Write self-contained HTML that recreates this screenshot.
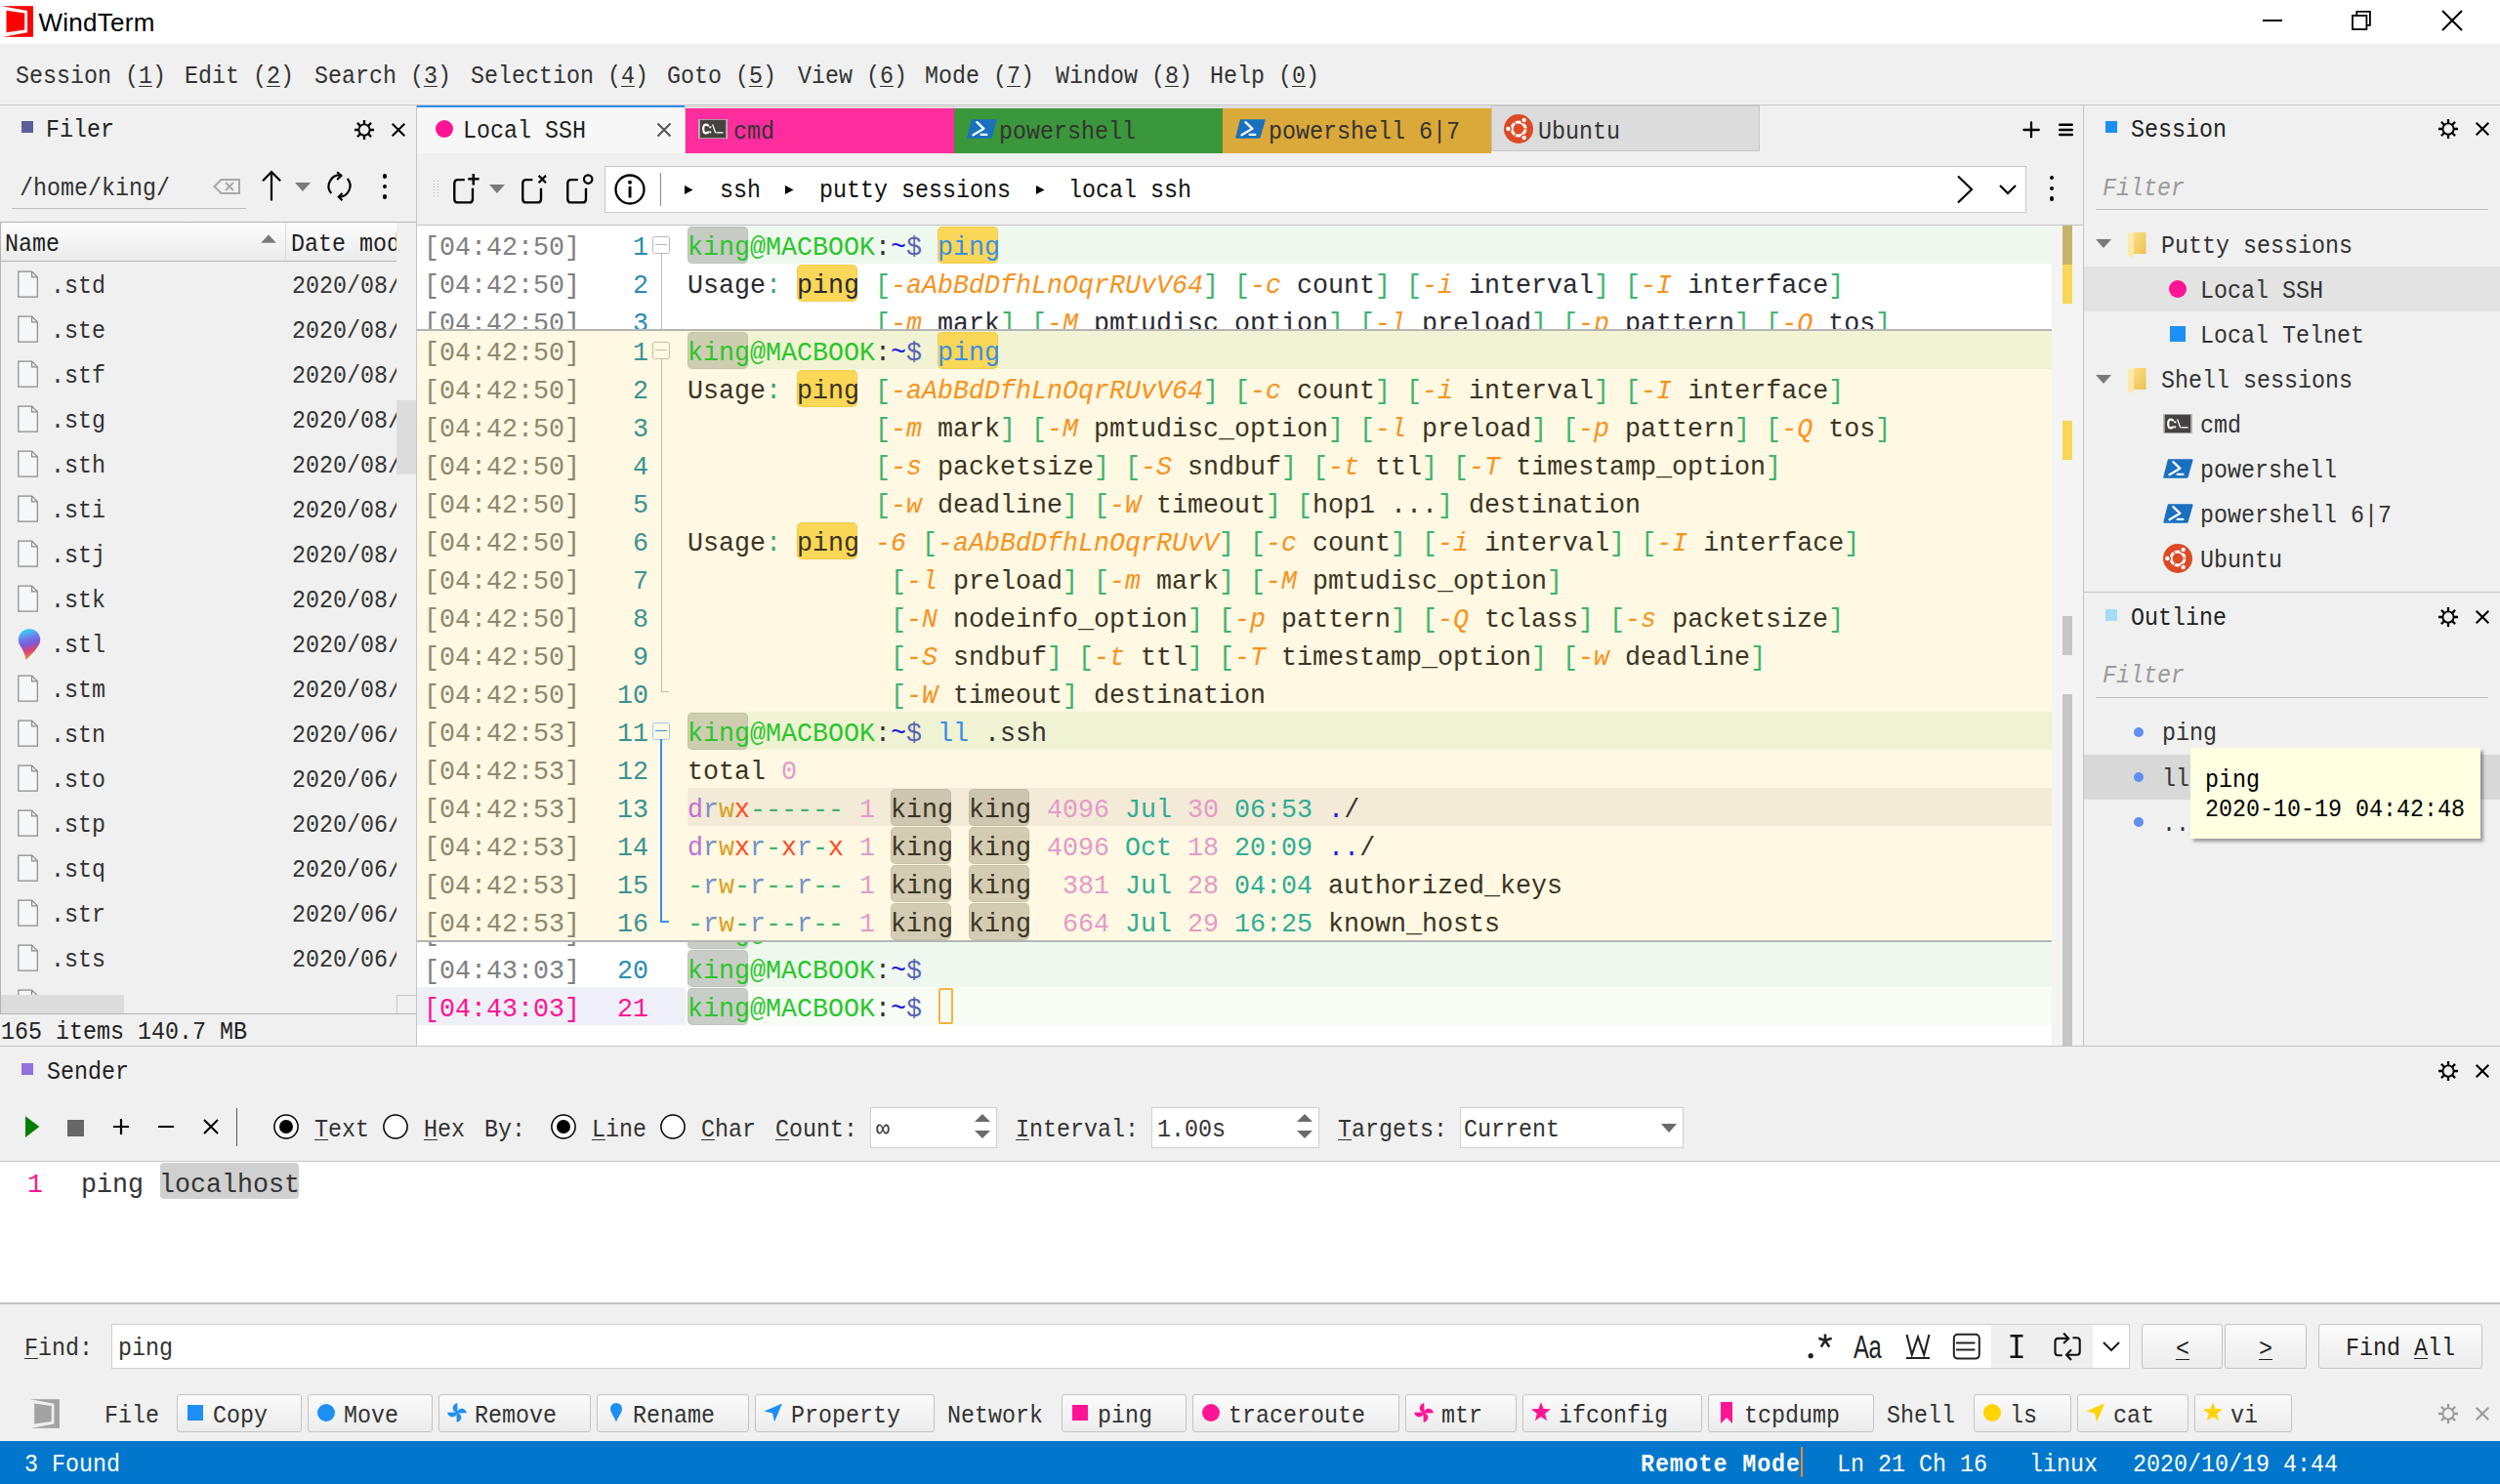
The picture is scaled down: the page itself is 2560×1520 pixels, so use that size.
<!DOCTYPE html><html><head><meta charset="utf-8"><style>
html,body{margin:0;padding:0;}
body{width:2560px;height:1520px;overflow:hidden;position:relative;background:#f0f0f0;font-family:'Liberation Mono',monospace;}
.t{position:absolute;white-space:pre;}
u{text-decoration:underline;text-underline-offset:3px;text-decoration-thickness:1.2px;}
</style></head><body>
<div style="position:absolute;left:0px;top:0px;width:2560px;height:45px;background:#fff"></div>
<svg style="position:absolute;left:2px;top:6px;" width="36.0" height="36.0" viewBox="0 0 36.0 36.0"><g transform="scale(1.0)"><rect x="0.5" y="0.2" width="31.5" height="31.6" fill="#f00"/><path d="M0 0.2 L26.1 5 V27.3 L0 32 Z" fill="#fff"/><path d="M4.5 4.8 L23.2 7.4 V24.6 L4.5 27.2 Z" fill="#f00"/></g></svg>
<div class="t" style="left:39.5px;top:10px;font-size:26px;line-height:26px;color:#000;font-family:'Liberation Sans', sans-serif;letter-spacing:0.27px">WindTerm</div>
<div style="position:absolute;left:2317px;top:20px;width:20px;height:2px;background:#000"></div>
<svg style="position:absolute;left:2404px;top:6px;" width="30" height="30" viewBox="0 0 30 30"><rect x="5" y="10" width="14.4" height="14" fill="none" stroke="#000" stroke-width="1.8"/><path d="M9.3 10 V5.8 H22.9 V19.8 H19.4" fill="none" stroke="#000" stroke-width="1.8"/></svg>
<svg style="position:absolute;left:2498px;top:8px;" width="26" height="26" viewBox="0 0 26 26"><path d="M3 3 L23 23 M23 3 L3 23" stroke="#000" stroke-width="2"/></svg>
<div class="t" style="left:15.6px;top:66px;font-size:25.8px;line-height:25.8px;color:#333;transform:scaleX(0.904);transform-origin:0 0;">Session (<u>1</u>)</div>
<div class="t" style="left:189.3px;top:66px;font-size:25.8px;line-height:25.8px;color:#333;transform:scaleX(0.904);transform-origin:0 0;">Edit (<u>2</u>)</div>
<div class="t" style="left:321.6px;top:66px;font-size:25.8px;line-height:25.8px;color:#333;transform:scaleX(0.904);transform-origin:0 0;">Search (<u>3</u>)</div>
<div class="t" style="left:481.5px;top:66px;font-size:25.8px;line-height:25.8px;color:#333;transform:scaleX(0.904);transform-origin:0 0;">Selection (<u>4</u>)</div>
<div class="t" style="left:683.2px;top:66px;font-size:25.8px;line-height:25.8px;color:#333;transform:scaleX(0.904);transform-origin:0 0;">Goto (<u>5</u>)</div>
<div class="t" style="left:816.7px;top:66px;font-size:25.8px;line-height:25.8px;color:#333;transform:scaleX(0.904);transform-origin:0 0;">View (<u>6</u>)</div>
<div class="t" style="left:947.2px;top:66px;font-size:25.8px;line-height:25.8px;color:#333;transform:scaleX(0.904);transform-origin:0 0;">Mode (<u>7</u>)</div>
<div class="t" style="left:1080.7px;top:66px;font-size:25.8px;line-height:25.8px;color:#333;transform:scaleX(0.904);transform-origin:0 0;">Window (<u>8</u>)</div>
<div class="t" style="left:1239.1px;top:66px;font-size:25.8px;line-height:25.8px;color:#333;transform:scaleX(0.904);transform-origin:0 0;">Help (<u>0</u>)</div>
<div style="position:absolute;left:0px;top:107px;width:2560px;height:1px;background:#c9c9c9"></div>
<div style="position:absolute;left:22px;top:124px;width:12px;height:12px;background:#5a5f9e"></div>
<div class="t" style="left:47px;top:121px;font-size:25.8px;line-height:25.8px;color:#222;transform:scaleX(0.904);transform-origin:0 0;">Filer</div>
<svg style="position:absolute;left:361px;top:120.5px;" width="24" height="24" viewBox="0 0 24 24"><circle cx="12" cy="12" r="5.6" fill="none" stroke="#000" stroke-width="1.9"/><path d="M18.00 12.00 L22.00 12.00 M16.24 16.24 L19.07 19.07 M12.00 18.00 L12.00 22.00 M7.76 16.24 L4.93 19.07 M6.00 12.00 L2.00 12.00 M7.76 7.76 L4.93 4.93 M12.00 6.00 L12.00 2.00 M16.24 7.76 L19.07 4.93" stroke="#000" stroke-width="2.3"/></svg>
<svg style="position:absolute;left:398px;top:122.5px;" width="20" height="20" viewBox="0 0 20 20"><path d="M3.7 3.7 L16.3 16.3 M16.3 3.7 L3.7 16.3" stroke="#000" stroke-width="2"/></svg>
<div class="t" style="left:20px;top:181px;font-size:25.8px;line-height:25.8px;color:#333;transform:scaleX(0.904);transform-origin:0 0;">/home/king/</div>
<div style="position:absolute;left:12px;top:213px;width:240px;height:1px;background:#bdbdbd"></div>
<svg style="position:absolute;left:217px;top:181px;" width="32" height="20" viewBox="0 0 32 20"><path d="M9.5 3 H28 V17 H9.5 L2.5 10 Z" fill="none" stroke="#a8a8a8" stroke-width="2"/><path d="M14 6 L22 14 M22 6 L14 14" stroke="#a8a8a8" stroke-width="2"/></svg>
<svg style="position:absolute;left:266px;top:173px;" width="24" height="34" viewBox="0 0 24 34"><path d="M12 32.5 V3 M3.1 12.2 L12 3 L21.1 12.2" fill="none" stroke="#000" stroke-width="2.2"/></svg>
<svg style="position:absolute;left:301px;top:186px;" width="18" height="12" viewBox="0 0 18 12"><path d="M1 1 H17 L9 10 Z" fill="#7a7a7a"/></svg>
<svg style="position:absolute;left:330px;top:172px;" width="36" height="36" viewBox="0 0 36 36"><path d="M9.2 26 A11.3 11.3 0 0 1 19.6 7.6" fill="none" stroke="#000" stroke-width="2.2"/><path d="M15.2 4.3 L19.4 8.1 L15.2 11.9" fill="none" stroke="#000" stroke-width="2.2"/><path d="M25.8 11 A11.3 11.3 0 0 1 17 29.6" fill="none" stroke="#000" stroke-width="2.2"/><path d="M20.5 26 L16.8 29.6 L20.5 33.3" fill="none" stroke="#000" stroke-width="2.2"/></svg>
<div style="position:absolute;left:391.55px;top:177.85000000000002px;width:4.9px;height:4.9px;border-radius:50%;background:#000"></div>
<div style="position:absolute;left:391.55px;top:188.55px;width:4.9px;height:4.9px;border-radius:50%;background:#000"></div>
<div style="position:absolute;left:391.55px;top:199.15px;width:4.9px;height:4.9px;border-radius:50%;background:#000"></div>
<div style="position:absolute;left:0px;top:227px;width:406px;height:41px;background:linear-gradient(#fdfdfd,#ebebeb);border-top:1px solid #b4b4b4;border-bottom:1px solid #b4b4b4;box-sizing:border-box"></div>
<div style="position:absolute;left:406px;top:227px;width:20px;height:1px;background:#b4b4b4"></div>
<div style="position:absolute;left:0px;top:227px;width:1px;height:812px;background:#b4b4b4"></div>
<div style="position:absolute;left:292px;top:228px;width:1px;height:38px;background:#d8d8d8"></div>
<div class="t" style="left:5px;top:238px;font-size:25.8px;line-height:25.8px;color:#222;transform:scaleX(0.904);transform-origin:0 0;">Name</div>
<svg style="position:absolute;left:267px;top:239px;" width="17" height="11" viewBox="0 0 17 11"><path d="M0.3 9.8 H15.8 L8 1.2 Z" fill="#7a7a7a"/></svg>
<div style="position:absolute;left:297.5px;top:228px;width:108.5px;height:38px;overflow:hidden">
<div class="t" style="left:0px;top:10px;font-size:25.8px;line-height:25.8px;color:#222;transform:scaleX(0.904);transform-origin:0 0;">Date modified</div>
</div>
<div style="position:absolute;left:1px;top:268px;width:405px;height:751px;overflow:hidden">
<svg style="position:absolute;left:15px;top:7.800000000000011px;" width="24" height="32" viewBox="0 0 24 32"><path d="M2.8 2.1 H16.6 L22.3 7.8 V28.2 H2.8 Z" fill="#f6f7f9" stroke="#8a8a8a" stroke-width="1.2"/><path d="M16.6 2.1 V7.8 H22.3" fill="none" stroke="#8a8a8a" stroke-width="1.2"/></svg>
<div class="t" style="left:51px;top:12.800000000000011px;font-size:25.8px;line-height:25.8px;color:#333;transform:scaleX(0.904);transform-origin:0 0;">.std</div>
<div class="t" style="left:298px;top:12.800000000000011px;font-size:25.8px;line-height:25.8px;color:#333;transform:scaleX(0.904);transform-origin:0 0;">2020/08/19</div>
<svg style="position:absolute;left:15px;top:53.80000000000001px;" width="24" height="32" viewBox="0 0 24 32"><path d="M2.8 2.1 H16.6 L22.3 7.8 V28.2 H2.8 Z" fill="#f6f7f9" stroke="#8a8a8a" stroke-width="1.2"/><path d="M16.6 2.1 V7.8 H22.3" fill="none" stroke="#8a8a8a" stroke-width="1.2"/></svg>
<div class="t" style="left:51px;top:58.80000000000001px;font-size:25.8px;line-height:25.8px;color:#333;transform:scaleX(0.904);transform-origin:0 0;">.ste</div>
<div class="t" style="left:298px;top:58.80000000000001px;font-size:25.8px;line-height:25.8px;color:#333;transform:scaleX(0.904);transform-origin:0 0;">2020/08/19</div>
<svg style="position:absolute;left:15px;top:99.80000000000001px;" width="24" height="32" viewBox="0 0 24 32"><path d="M2.8 2.1 H16.6 L22.3 7.8 V28.2 H2.8 Z" fill="#f6f7f9" stroke="#8a8a8a" stroke-width="1.2"/><path d="M16.6 2.1 V7.8 H22.3" fill="none" stroke="#8a8a8a" stroke-width="1.2"/></svg>
<div class="t" style="left:51px;top:104.80000000000001px;font-size:25.8px;line-height:25.8px;color:#333;transform:scaleX(0.904);transform-origin:0 0;">.stf</div>
<div class="t" style="left:298px;top:104.80000000000001px;font-size:25.8px;line-height:25.8px;color:#333;transform:scaleX(0.904);transform-origin:0 0;">2020/08/19</div>
<svg style="position:absolute;left:15px;top:145.8px;" width="24" height="32" viewBox="0 0 24 32"><path d="M2.8 2.1 H16.6 L22.3 7.8 V28.2 H2.8 Z" fill="#f6f7f9" stroke="#8a8a8a" stroke-width="1.2"/><path d="M16.6 2.1 V7.8 H22.3" fill="none" stroke="#8a8a8a" stroke-width="1.2"/></svg>
<div class="t" style="left:51px;top:150.8px;font-size:25.8px;line-height:25.8px;color:#333;transform:scaleX(0.904);transform-origin:0 0;">.stg</div>
<div class="t" style="left:298px;top:150.8px;font-size:25.8px;line-height:25.8px;color:#333;transform:scaleX(0.904);transform-origin:0 0;">2020/08/19</div>
<svg style="position:absolute;left:15px;top:191.8px;" width="24" height="32" viewBox="0 0 24 32"><path d="M2.8 2.1 H16.6 L22.3 7.8 V28.2 H2.8 Z" fill="#f6f7f9" stroke="#8a8a8a" stroke-width="1.2"/><path d="M16.6 2.1 V7.8 H22.3" fill="none" stroke="#8a8a8a" stroke-width="1.2"/></svg>
<div class="t" style="left:51px;top:196.8px;font-size:25.8px;line-height:25.8px;color:#333;transform:scaleX(0.904);transform-origin:0 0;">.sth</div>
<div class="t" style="left:298px;top:196.8px;font-size:25.8px;line-height:25.8px;color:#333;transform:scaleX(0.904);transform-origin:0 0;">2020/08/19</div>
<svg style="position:absolute;left:15px;top:237.79999999999995px;" width="24" height="32" viewBox="0 0 24 32"><path d="M2.8 2.1 H16.6 L22.3 7.8 V28.2 H2.8 Z" fill="#f6f7f9" stroke="#8a8a8a" stroke-width="1.2"/><path d="M16.6 2.1 V7.8 H22.3" fill="none" stroke="#8a8a8a" stroke-width="1.2"/></svg>
<div class="t" style="left:51px;top:242.79999999999995px;font-size:25.8px;line-height:25.8px;color:#333;transform:scaleX(0.904);transform-origin:0 0;">.sti</div>
<div class="t" style="left:298px;top:242.79999999999995px;font-size:25.8px;line-height:25.8px;color:#333;transform:scaleX(0.904);transform-origin:0 0;">2020/08/19</div>
<svg style="position:absolute;left:15px;top:283.79999999999995px;" width="24" height="32" viewBox="0 0 24 32"><path d="M2.8 2.1 H16.6 L22.3 7.8 V28.2 H2.8 Z" fill="#f6f7f9" stroke="#8a8a8a" stroke-width="1.2"/><path d="M16.6 2.1 V7.8 H22.3" fill="none" stroke="#8a8a8a" stroke-width="1.2"/></svg>
<div class="t" style="left:51px;top:288.79999999999995px;font-size:25.8px;line-height:25.8px;color:#333;transform:scaleX(0.904);transform-origin:0 0;">.stj</div>
<div class="t" style="left:298px;top:288.79999999999995px;font-size:25.8px;line-height:25.8px;color:#333;transform:scaleX(0.904);transform-origin:0 0;">2020/08/19</div>
<svg style="position:absolute;left:15px;top:329.79999999999995px;" width="24" height="32" viewBox="0 0 24 32"><path d="M2.8 2.1 H16.6 L22.3 7.8 V28.2 H2.8 Z" fill="#f6f7f9" stroke="#8a8a8a" stroke-width="1.2"/><path d="M16.6 2.1 V7.8 H22.3" fill="none" stroke="#8a8a8a" stroke-width="1.2"/></svg>
<div class="t" style="left:51px;top:334.79999999999995px;font-size:25.8px;line-height:25.8px;color:#333;transform:scaleX(0.904);transform-origin:0 0;">.stk</div>
<div class="t" style="left:298px;top:334.79999999999995px;font-size:25.8px;line-height:25.8px;color:#333;transform:scaleX(0.904);transform-origin:0 0;">2020/08/19</div>
<svg style="position:absolute;left:16px;top:374.99999999999994px;" width="26" height="34" viewBox="0 0 26 34"><defs><linearGradient id="pg" x1="0.3" y1="0" x2="0.5" y2="1"><stop offset="0" stop-color="#2ee2f6"/><stop offset="0.33" stop-color="#7078ee"/><stop offset="0.5" stop-color="#7a5ad8"/><stop offset="0.72" stop-color="#d84478"/><stop offset="0.9" stop-color="#ee7a30"/><stop offset="1" stop-color="#f5b010"/></linearGradient></defs><path d="M22.2 18.5 C19.5 23 15 27.5 9.6 33 C9.2 29 7.5 24.5 3.8 18.5 A11.2 11.2 0 1 1 22.2 18.5 Z" fill="url(#pg)"/></svg>
<div class="t" style="left:51px;top:380.79999999999995px;font-size:25.8px;line-height:25.8px;color:#333;transform:scaleX(0.904);transform-origin:0 0;">.stl</div>
<div class="t" style="left:298px;top:380.79999999999995px;font-size:25.8px;line-height:25.8px;color:#333;transform:scaleX(0.904);transform-origin:0 0;">2020/08/19</div>
<svg style="position:absolute;left:15px;top:421.79999999999995px;" width="24" height="32" viewBox="0 0 24 32"><path d="M2.8 2.1 H16.6 L22.3 7.8 V28.2 H2.8 Z" fill="#f6f7f9" stroke="#8a8a8a" stroke-width="1.2"/><path d="M16.6 2.1 V7.8 H22.3" fill="none" stroke="#8a8a8a" stroke-width="1.2"/></svg>
<div class="t" style="left:51px;top:426.79999999999995px;font-size:25.8px;line-height:25.8px;color:#333;transform:scaleX(0.904);transform-origin:0 0;">.stm</div>
<div class="t" style="left:298px;top:426.79999999999995px;font-size:25.8px;line-height:25.8px;color:#333;transform:scaleX(0.904);transform-origin:0 0;">2020/08/19</div>
<svg style="position:absolute;left:15px;top:467.79999999999995px;" width="24" height="32" viewBox="0 0 24 32"><path d="M2.8 2.1 H16.6 L22.3 7.8 V28.2 H2.8 Z" fill="#f6f7f9" stroke="#8a8a8a" stroke-width="1.2"/><path d="M16.6 2.1 V7.8 H22.3" fill="none" stroke="#8a8a8a" stroke-width="1.2"/></svg>
<div class="t" style="left:51px;top:472.79999999999995px;font-size:25.8px;line-height:25.8px;color:#333;transform:scaleX(0.904);transform-origin:0 0;">.stn</div>
<div class="t" style="left:298px;top:472.79999999999995px;font-size:25.8px;line-height:25.8px;color:#333;transform:scaleX(0.904);transform-origin:0 0;">2020/06/21</div>
<svg style="position:absolute;left:15px;top:513.8px;" width="24" height="32" viewBox="0 0 24 32"><path d="M2.8 2.1 H16.6 L22.3 7.8 V28.2 H2.8 Z" fill="#f6f7f9" stroke="#8a8a8a" stroke-width="1.2"/><path d="M16.6 2.1 V7.8 H22.3" fill="none" stroke="#8a8a8a" stroke-width="1.2"/></svg>
<div class="t" style="left:51px;top:518.8px;font-size:25.8px;line-height:25.8px;color:#333;transform:scaleX(0.904);transform-origin:0 0;">.sto</div>
<div class="t" style="left:298px;top:518.8px;font-size:25.8px;line-height:25.8px;color:#333;transform:scaleX(0.904);transform-origin:0 0;">2020/06/21</div>
<svg style="position:absolute;left:15px;top:559.8px;" width="24" height="32" viewBox="0 0 24 32"><path d="M2.8 2.1 H16.6 L22.3 7.8 V28.2 H2.8 Z" fill="#f6f7f9" stroke="#8a8a8a" stroke-width="1.2"/><path d="M16.6 2.1 V7.8 H22.3" fill="none" stroke="#8a8a8a" stroke-width="1.2"/></svg>
<div class="t" style="left:51px;top:564.8px;font-size:25.8px;line-height:25.8px;color:#333;transform:scaleX(0.904);transform-origin:0 0;">.stp</div>
<div class="t" style="left:298px;top:564.8px;font-size:25.8px;line-height:25.8px;color:#333;transform:scaleX(0.904);transform-origin:0 0;">2020/06/21</div>
<svg style="position:absolute;left:15px;top:605.8px;" width="24" height="32" viewBox="0 0 24 32"><path d="M2.8 2.1 H16.6 L22.3 7.8 V28.2 H2.8 Z" fill="#f6f7f9" stroke="#8a8a8a" stroke-width="1.2"/><path d="M16.6 2.1 V7.8 H22.3" fill="none" stroke="#8a8a8a" stroke-width="1.2"/></svg>
<div class="t" style="left:51px;top:610.8px;font-size:25.8px;line-height:25.8px;color:#333;transform:scaleX(0.904);transform-origin:0 0;">.stq</div>
<div class="t" style="left:298px;top:610.8px;font-size:25.8px;line-height:25.8px;color:#333;transform:scaleX(0.904);transform-origin:0 0;">2020/06/21</div>
<svg style="position:absolute;left:15px;top:651.8px;" width="24" height="32" viewBox="0 0 24 32"><path d="M2.8 2.1 H16.6 L22.3 7.8 V28.2 H2.8 Z" fill="#f6f7f9" stroke="#8a8a8a" stroke-width="1.2"/><path d="M16.6 2.1 V7.8 H22.3" fill="none" stroke="#8a8a8a" stroke-width="1.2"/></svg>
<div class="t" style="left:51px;top:656.8px;font-size:25.8px;line-height:25.8px;color:#333;transform:scaleX(0.904);transform-origin:0 0;">.str</div>
<div class="t" style="left:298px;top:656.8px;font-size:25.8px;line-height:25.8px;color:#333;transform:scaleX(0.904);transform-origin:0 0;">2020/06/21</div>
<svg style="position:absolute;left:15px;top:697.8px;" width="24" height="32" viewBox="0 0 24 32"><path d="M2.8 2.1 H16.6 L22.3 7.8 V28.2 H2.8 Z" fill="#f6f7f9" stroke="#8a8a8a" stroke-width="1.2"/><path d="M16.6 2.1 V7.8 H22.3" fill="none" stroke="#8a8a8a" stroke-width="1.2"/></svg>
<div class="t" style="left:51px;top:702.8px;font-size:25.8px;line-height:25.8px;color:#333;transform:scaleX(0.904);transform-origin:0 0;">.sts</div>
<div class="t" style="left:298px;top:702.8px;font-size:25.8px;line-height:25.8px;color:#333;transform:scaleX(0.904);transform-origin:0 0;">2020/06/21</div>
<svg style="position:absolute;left:15px;top:743.8px;" width="24" height="32" viewBox="0 0 24 32"><path d="M2.8 2.1 H16.6 L22.3 7.8 V28.2 H2.8 Z" fill="#f6f7f9" stroke="#8a8a8a" stroke-width="1.2"/><path d="M16.6 2.1 V7.8 H22.3" fill="none" stroke="#8a8a8a" stroke-width="1.2"/></svg>
<div class="t" style="left:51px;top:748.8px;font-size:25.8px;line-height:25.8px;color:#333;transform:scaleX(0.904);transform-origin:0 0;">.stt</div>
</div>
<div style="position:absolute;left:406px;top:268px;width:20px;height:751px;background:#f0f0f0"></div>
<div style="position:absolute;left:406px;top:410px;width:20px;height:76px;background:#dcdcdc"></div>
<div style="position:absolute;left:1px;top:1019px;width:405px;height:20px;background:#f0f0f0"></div>
<div style="position:absolute;left:1px;top:1019px;width:126px;height:20px;background:#dcdcdc"></div>
<div style="position:absolute;left:406px;top:1019px;width:20px;height:20px;background:#f0f0f0;border-top:1px solid #c8c8c8;border-left:1px solid #c8c8c8;box-sizing:border-box"></div>
<div style="position:absolute;left:0px;top:1038px;width:426px;height:1px;background:#b4b4b4"></div>
<div class="t" style="left:1px;top:1045px;font-size:25.8px;line-height:25.8px;color:#222;transform:scaleX(0.904);transform-origin:0 0;">165 items 140.7 MB</div>
<div style="position:absolute;left:0px;top:1071px;width:2560px;height:1px;background:#c4c4c4"></div>
<div style="position:absolute;left:426px;top:108px;width:1px;height:964px;background:#c4c4c4"></div>
<div style="position:absolute;left:427px;top:108px;width:274px;height:49px;background:#f7f7f7"></div>
<div style="position:absolute;left:427px;top:108px;width:274px;height:2px;background:#2c8cf0"></div>
<div style="position:absolute;left:701px;top:108px;width:1px;height:49px;background:#cfcfcf"></div>
<div style="position:absolute;left:446px;top:123px;width:18px;height:18px;border-radius:50%;background:#ff1493"></div>
<div class="t" style="left:474px;top:122px;font-size:25.8px;line-height:25.8px;color:#222;transform:scaleX(0.904);transform-origin:0 0;">Local SSH</div>
<svg style="position:absolute;left:670px;top:122.5px;" width="20" height="20" viewBox="0 0 20 20"><path d="M3.5 3.5 L16.5 16.5 M16.5 3.5 L3.5 16.5" stroke="#555" stroke-width="2"/></svg>
<div style="position:absolute;left:702px;top:108px;width:1100px;height:3px;background:#dedede"></div>
<div style="position:absolute;left:702px;top:111px;width:275px;height:46px;background:#ff2d9d"></div>
<div style="position:absolute;left:977px;top:111px;width:275px;height:46px;background:#3b973b"></div>
<div style="position:absolute;left:1252px;top:111px;width:275px;height:46px;background:#dba93a"></div>
<div style="position:absolute;left:976px;top:108px;width:1px;height:3px;background:#c8c8c8"></div>
<div style="position:absolute;left:1527px;top:108px;width:275px;height:47px;background:#dcdcdc;border:1px solid #c6c6c6;box-sizing:border-box"></div>
<svg style="position:absolute;left:715px;top:122px;" width="30" height="20" viewBox="0 0 30 20"><rect x="0" y="0" width="30" height="20" fill="#b8b8b8"/><rect x="1.8" y="0.8" width="26.4" height="18.4" fill="#464241"/><path d="M10.2 7.4 Q10.2 5.6 7.8 5.6 Q5.2 5.6 5.2 10 Q5.2 14.4 7.8 14.4 Q10.2 14.4 10.2 12.6" fill="none" stroke="#fff" stroke-width="2.2"/><rect x="11.3" y="7.3" width="2" height="2" fill="#fff"/><rect x="11.3" y="12.4" width="2" height="2" fill="#fff"/><path d="M14.6 5.4 L17.8 14.2" stroke="#fff" stroke-width="1.3"/><rect x="18.6" y="13.2" width="7" height="1.3" fill="#fff"/></svg>
<div class="t" style="left:751px;top:123px;font-size:25.8px;line-height:25.8px;color:#333;transform:scaleX(0.904);transform-origin:0 0;">cmd</div>
<svg style="position:absolute;left:990px;top:122px;" width="31" height="21" viewBox="0 0 31 21"><path d="M5.6 0.3 H29.6 Q31 0.3 30.5 1.8 L25.7 18.5 Q25.3 19.7 24 19.7 H1.4 Q0 19.7 0.4 18.2 L4.6 1.5 Q4.9 0.3 5.6 0.3 Z" fill="#1870bf"/><path d="M10.4 3.1 L17.4 9.8 L6.5 16.2" fill="none" stroke="#fff" stroke-width="2.3" stroke-linecap="round" stroke-linejoin="round"/><path d="M14.6 15.9 H20.4" stroke="#fff" stroke-width="2.2" stroke-linecap="round"/></svg>
<div class="t" style="left:1023px;top:123px;font-size:25.8px;line-height:25.8px;color:#333;transform:scaleX(0.904);transform-origin:0 0;">powershell</div>
<svg style="position:absolute;left:1265px;top:122px;" width="31" height="21" viewBox="0 0 31 21"><path d="M5.6 0.3 H29.6 Q31 0.3 30.5 1.8 L25.7 18.5 Q25.3 19.7 24 19.7 H1.4 Q0 19.7 0.4 18.2 L4.6 1.5 Q4.9 0.3 5.6 0.3 Z" fill="#1870bf"/><path d="M10.4 3.1 L17.4 9.8 L6.5 16.2" fill="none" stroke="#fff" stroke-width="2.3" stroke-linecap="round" stroke-linejoin="round"/><path d="M14.6 15.9 H20.4" stroke="#fff" stroke-width="2.2" stroke-linecap="round"/></svg>
<div class="t" style="left:1298.5px;top:123px;font-size:25.8px;line-height:25.8px;color:#333;transform:scaleX(0.904);transform-origin:0 0;">powershell 6|7</div>
<svg style="position:absolute;left:1540px;top:117px;" width="30" height="30" viewBox="0 0 30 30"><circle cx="15" cy="15" r="15" fill="#dd4a26"/><circle cx="15" cy="15" r="7" fill="none" stroke="#fff" stroke-width="3.1"/><path d="M19.80 15.00 L24.40 15.00" stroke="#dd4a26" stroke-width="1.1"/><path d="M12.60 19.16 L10.30 23.14" stroke="#dd4a26" stroke-width="1.1"/><path d="M12.60 10.84 L10.30 6.86" stroke="#dd4a26" stroke-width="1.1"/><circle cx="4.40" cy="15.00" r="3.6" fill="#dd4a26"/><circle cx="4.40" cy="15.00" r="2.2" fill="#fff"/><circle cx="20.62" cy="6.01" r="3.6" fill="#dd4a26"/><circle cx="20.62" cy="6.01" r="2.2" fill="#fff"/><circle cx="20.62" cy="23.99" r="3.6" fill="#dd4a26"/><circle cx="20.62" cy="23.99" r="2.2" fill="#fff"/></svg>
<div class="t" style="left:1575px;top:123px;font-size:25.8px;line-height:25.8px;color:#333;transform:scaleX(0.904);transform-origin:0 0;">Ubuntu</div>
<svg style="position:absolute;left:2068px;top:121px;" width="24" height="24" viewBox="0 0 24 24"><path d="M12 4.4 V19.3 M4.4 12 H19.8" stroke="#000" stroke-width="2.3" stroke-linecap="round"/></svg>
<svg style="position:absolute;left:2103px;top:124px;" width="24" height="20" viewBox="0 0 24 20"><path d="M6.2 3.8 H18.8 M6.2 9 H18.8 M6.2 14.1 H18.8" stroke="#000" stroke-width="2.5" stroke-linecap="round"/></svg>
<div style="position:absolute;left:443.5px;top:185px;width:1px;height:1px;background:#b0b0b0"></div>
<div style="position:absolute;left:447.5px;top:185px;width:1px;height:1px;background:#b0b0b0"></div>
<div style="position:absolute;left:443.5px;top:188px;width:1px;height:1px;background:#b0b0b0"></div>
<div style="position:absolute;left:447.5px;top:188px;width:1px;height:1px;background:#b0b0b0"></div>
<div style="position:absolute;left:443.5px;top:191px;width:1px;height:1px;background:#b0b0b0"></div>
<div style="position:absolute;left:447.5px;top:191px;width:1px;height:1px;background:#b0b0b0"></div>
<div style="position:absolute;left:443.5px;top:194px;width:1px;height:1px;background:#b0b0b0"></div>
<div style="position:absolute;left:447.5px;top:194px;width:1px;height:1px;background:#b0b0b0"></div>
<div style="position:absolute;left:443.5px;top:197px;width:1px;height:1px;background:#b0b0b0"></div>
<div style="position:absolute;left:447.5px;top:197px;width:1px;height:1px;background:#b0b0b0"></div>
<div style="position:absolute;left:443.5px;top:200px;width:1px;height:1px;background:#b0b0b0"></div>
<div style="position:absolute;left:447.5px;top:200px;width:1px;height:1px;background:#b0b0b0"></div>
<svg style="position:absolute;left:461px;top:176px;" width="32" height="34" viewBox="0 0 32 34"><path d="M14.8 8.1 H7.8 Q4.3 8.1 4.3 11.6 V27.9 Q4.3 31.4 7.8 31.4 H19.5 Q23 31.4 23 27.9 V16.8" fill="none" stroke="#000" stroke-width="2.35"/><path d="M23.8 2 V13.4 M18.3 7.3 H29.6" stroke="#000" stroke-width="2.5"/></svg>
<svg style="position:absolute;left:500px;top:188px;" width="18" height="12" viewBox="0 0 18 12"><path d="M1 1 H17 L9 10 Z" fill="#7a7a7a"/></svg>
<svg style="position:absolute;left:531px;top:176px;" width="32" height="34" viewBox="0 0 32 34"><path d="M14.4 8.1 H7.8 Q4.3 8.1 4.3 11.6 V27.9 Q4.3 31.4 7.8 31.4 H19.5 Q23 31.4 23 27.9 V16.8" fill="none" stroke="#000" stroke-width="2.35"/><path d="M20.6 3.9 L28 11.2 M28 3.9 L20.6 11.2" stroke="#000" stroke-width="2.2"/></svg>
<svg style="position:absolute;left:576.5px;top:176px;" width="32" height="34" viewBox="0 0 32 34"><path d="M14.8 8.1 H7.8 Q4.3 8.1 4.3 11.6 V27.9 Q4.3 31.4 7.8 31.4 H19.5 Q23 31.4 23 27.9 V16.8" fill="none" stroke="#000" stroke-width="2.35"/><circle cx="25.2" cy="7.6" r="4.2" fill="none" stroke="#000" stroke-width="2.2"/></svg>
<div style="position:absolute;left:619px;top:170px;width:1456px;height:48px;background:#fff;border:1px solid #c6c6c6;box-sizing:border-box"></div>
<svg style="position:absolute;left:628px;top:177px;" width="34" height="34" viewBox="0 0 34 34"><circle cx="17" cy="17" r="14.5" fill="none" stroke="#000" stroke-width="2.3"/><circle cx="17" cy="9.8" r="2" fill="#000"/><rect x="15.6" y="14" width="2.9" height="11.5" fill="#000"/></svg>
<div style="position:absolute;left:676px;top:177px;width:1px;height:34px;background:#8a8a8a"></div>
<svg style="position:absolute;left:700px;top:189px;" width="10" height="12" viewBox="0 0 10 12"><path d="M1 1 L9.6 5.5 L1 10 Z" fill="#000"/></svg>
<div class="t" style="left:737px;top:183px;font-size:25.8px;line-height:25.8px;color:#111;transform:scaleX(0.904);transform-origin:0 0;">ssh</div>
<svg style="position:absolute;left:803px;top:189px;" width="10" height="12" viewBox="0 0 10 12"><path d="M1 1 L9.6 5.5 L1 10 Z" fill="#000"/></svg>
<div class="t" style="left:839px;top:183px;font-size:25.8px;line-height:25.8px;color:#111;transform:scaleX(0.904);transform-origin:0 0;">putty sessions</div>
<svg style="position:absolute;left:1060px;top:189px;" width="10" height="12" viewBox="0 0 10 12"><path d="M1 1 L9.6 5.5 L1 10 Z" fill="#000"/></svg>
<div class="t" style="left:1094px;top:183px;font-size:25.8px;line-height:25.8px;color:#111;transform:scaleX(0.904);transform-origin:0 0;">local ssh</div>
<svg style="position:absolute;left:2000px;top:178px;" width="24" height="32" viewBox="0 0 24 32"><path d="M5 2.5 L19 16 L5 29.5" fill="none" stroke="#000" stroke-width="2.2"/></svg>
<svg style="position:absolute;left:2045px;top:186px;" width="22" height="16" viewBox="0 0 22 16"><path d="M3 4 L11 12 L19 4" fill="none" stroke="#000" stroke-width="2.2"/></svg>
<div style="position:absolute;left:2098.65px;top:179.65px;width:4.7px;height:4.7px;border-radius:50%;background:#000"></div>
<div style="position:absolute;left:2098.65px;top:190.65px;width:4.7px;height:4.7px;border-radius:50%;background:#000"></div>
<div style="position:absolute;left:2098.65px;top:201.45000000000002px;width:4.7px;height:4.7px;border-radius:50%;background:#000"></div>
<div style="position:absolute;left:427px;top:230px;width:1706px;height:1px;background:#c4c4c4"></div>
<div style="position:absolute;left:427px;top:231px;width:1674px;height:106px;overflow:hidden;background:#fff">
<div style="position:absolute;left:-427px;top:-231px;width:2560px;height:1520px">
<div style="position:absolute;left:704px;top:231px;width:1397px;height:39px;background:#eef8ee"></div>
<div style="position:absolute;left:703.7px;top:231.6px;width:62.0px;height:38px;background:#c6cbc4;border-radius:5px;box-shadow:inset 0 0 0 1px rgba(0,0,0,0.05)"></div>
<div style="position:absolute;left:959.7px;top:231.6px;width:62.0px;height:38px;background:#fbd757;border-radius:5px;box-shadow:inset 0 0 0 1px rgba(0,0,0,0.05)"></div>
<div class="t" style="left:434px;top:240px;font-size:28.5px;line-height:28.5px;color:#808080;transform:scaleX(0.9355);transform-origin:0 0;">[04:42:50]</div>
<div class="t" style="left:648.0px;top:240px;font-size:28.5px;line-height:28.5px;color:#2b8db3;transform:scaleX(0.9355);transform-origin:0 0;">1</div>
<div class="t" style="left:704px;top:240px;font-size:28.5px;line-height:28.5px;color:#2a2a33;transform:scaleX(0.9355);transform-origin:0 0"><span style="color:#2bc62b">king@MACBOOK</span><span style="color:#333">:</span><span style="color:#1a1ae6">~</span><span style="color:#5a66b4">$</span><span style="color:#333"> </span><span style="color:#3a8ee6">ping</span></div>
<div style="position:absolute;left:815.7px;top:270.6px;width:62.0px;height:38px;background:#fbd757;border-radius:5px;box-shadow:inset 0 0 0 1px rgba(0,0,0,0.05)"></div>
<div class="t" style="left:434px;top:279px;font-size:28.5px;line-height:28.5px;color:#808080;transform:scaleX(0.9355);transform-origin:0 0;">[04:42:50]</div>
<div class="t" style="left:648.0px;top:279px;font-size:28.5px;line-height:28.5px;color:#2b8db3;transform:scaleX(0.9355);transform-origin:0 0;">2</div>
<div class="t" style="left:704px;top:279px;font-size:28.5px;line-height:28.5px;color:#2a2a33;transform:scaleX(0.9355);transform-origin:0 0"><span style="color:#2a2a33">Usage</span><span style="color:#3aa57c">:</span><span style="color:#333"> </span><span style="color:#2a2a33">ping</span><span style="color:#2a2a33"> </span><span style="color:#3db46e">[</span><span style="color:#f7931e;font-style:italic">-aAbBdDfhLnOqrRUvV64</span><span style="color:#3db46e">]</span><span style="color:#2a2a33"> </span><span style="color:#3db46e">[</span><span style="color:#f7931e;font-style:italic">-c</span><span style="color:#2a2a33"> count</span><span style="color:#3db46e">]</span><span style="color:#2a2a33"> </span><span style="color:#3db46e">[</span><span style="color:#f7931e;font-style:italic">-i</span><span style="color:#2a2a33"> interval</span><span style="color:#3db46e">]</span><span style="color:#2a2a33"> </span><span style="color:#3db46e">[</span><span style="color:#f7931e;font-style:italic">-I</span><span style="color:#2a2a33"> interface</span><span style="color:#3db46e">]</span></div>
<div class="t" style="left:434px;top:318px;font-size:28.5px;line-height:28.5px;color:#808080;transform:scaleX(0.9355);transform-origin:0 0;">[04:42:50]</div>
<div class="t" style="left:648.0px;top:318px;font-size:28.5px;line-height:28.5px;color:#2b8db3;transform:scaleX(0.9355);transform-origin:0 0;">3</div>
<div class="t" style="left:704px;top:318px;font-size:28.5px;line-height:28.5px;color:#2a2a33;transform:scaleX(0.9355);transform-origin:0 0"><span style="color:#2a2a33">            </span><span style="color:#3db46e">[</span><span style="color:#f7931e;font-style:italic">-m</span><span style="color:#2a2a33"> mark</span><span style="color:#3db46e">]</span><span style="color:#2a2a33"> </span><span style="color:#3db46e">[</span><span style="color:#f7931e;font-style:italic">-M</span><span style="color:#2a2a33"> pmtudisc_option</span><span style="color:#3db46e">]</span><span style="color:#2a2a33"> </span><span style="color:#3db46e">[</span><span style="color:#f7931e;font-style:italic">-l</span><span style="color:#2a2a33"> preload</span><span style="color:#3db46e">]</span><span style="color:#2a2a33"> </span><span style="color:#3db46e">[</span><span style="color:#f7931e;font-style:italic">-p</span><span style="color:#2a2a33"> pattern</span><span style="color:#3db46e">]</span><span style="color:#2a2a33"> </span><span style="color:#3db46e">[</span><span style="color:#f7931e;font-style:italic">-Q</span><span style="color:#2a2a33"> tos</span><span style="color:#3db46e">]</span></div>
<div style="position:absolute;left:668px;top:242px;width:18px;height:17.5px;border:1.6px solid #b9b9b9;border-radius:2.5px;box-sizing:border-box;background:transparent"></div>
<div style="position:absolute;left:671px;top:250.1px;width:12px;height:1.4px;background:#b9b9b9"></div>
<div style="position:absolute;left:676.5px;top:259px;width:1.3px;height:80px;background:#b9b9b9"></div>
</div></div>
<div style="position:absolute;left:427px;top:337px;width:1674px;height:2px;background:#b5b5b5"></div>
<div style="position:absolute;left:427px;top:339px;width:1674px;height:624px;background:#fff8e2"></div>
<div style="position:absolute;left:704px;top:339px;width:1397px;height:39px;background:#f1f3d4"></div>
<div style="position:absolute;left:703.7px;top:339.6px;width:62.0px;height:38px;background:#cfcdb1;border-radius:5px;box-shadow:inset 0 0 0 1px rgba(0,0,0,0.05)"></div>
<div style="position:absolute;left:959.7px;top:339.6px;width:62.0px;height:38px;background:#fbd757;border-radius:5px;box-shadow:inset 0 0 0 1px rgba(0,0,0,0.05)"></div>
<div class="t" style="left:434px;top:348px;font-size:28.5px;line-height:28.5px;color:#8d896f;transform:scaleX(0.9355);transform-origin:0 0;">[04:42:50]</div>
<div class="t" style="left:648.0px;top:348px;font-size:28.5px;line-height:28.5px;color:#3b9393;transform:scaleX(0.9355);transform-origin:0 0;">1</div>
<div class="t" style="left:704px;top:348px;font-size:28.5px;line-height:28.5px;color:#3b3424;transform:scaleX(0.9355);transform-origin:0 0"><span style="color:#2bc62b">king@MACBOOK</span><span style="color:#333">:</span><span style="color:#1a1ae6">~</span><span style="color:#5a66b4">$</span><span style="color:#333"> </span><span style="color:#3a8ee6">ping</span></div>
<div style="position:absolute;left:815.7px;top:378.6px;width:62.0px;height:38px;background:#fbd757;border-radius:5px;box-shadow:inset 0 0 0 1px rgba(0,0,0,0.05)"></div>
<div class="t" style="left:434px;top:387px;font-size:28.5px;line-height:28.5px;color:#8d896f;transform:scaleX(0.9355);transform-origin:0 0;">[04:42:50]</div>
<div class="t" style="left:648.0px;top:387px;font-size:28.5px;line-height:28.5px;color:#3b9393;transform:scaleX(0.9355);transform-origin:0 0;">2</div>
<div class="t" style="left:704px;top:387px;font-size:28.5px;line-height:28.5px;color:#3b3424;transform:scaleX(0.9355);transform-origin:0 0"><span style="color:#3b3424">Usage</span><span style="color:#3aa57c">:</span><span style="color:#3b3424"> </span><span style="color:#3b3424">ping</span><span style="color:#3b3424"> </span><span style="color:#3db46e">[</span><span style="color:#f7931e;font-style:italic">-aAbBdDfhLnOqrRUvV64</span><span style="color:#3db46e">]</span><span style="color:#3b3424"> </span><span style="color:#3db46e">[</span><span style="color:#f7931e;font-style:italic">-c</span><span style="color:#3b3424"> count</span><span style="color:#3db46e">]</span><span style="color:#3b3424"> </span><span style="color:#3db46e">[</span><span style="color:#f7931e;font-style:italic">-i</span><span style="color:#3b3424"> interval</span><span style="color:#3db46e">]</span><span style="color:#3b3424"> </span><span style="color:#3db46e">[</span><span style="color:#f7931e;font-style:italic">-I</span><span style="color:#3b3424"> interface</span><span style="color:#3db46e">]</span></div>
<div class="t" style="left:434px;top:426px;font-size:28.5px;line-height:28.5px;color:#8d896f;transform:scaleX(0.9355);transform-origin:0 0;">[04:42:50]</div>
<div class="t" style="left:648.0px;top:426px;font-size:28.5px;line-height:28.5px;color:#3b9393;transform:scaleX(0.9355);transform-origin:0 0;">3</div>
<div class="t" style="left:704px;top:426px;font-size:28.5px;line-height:28.5px;color:#3b3424;transform:scaleX(0.9355);transform-origin:0 0"><span style="color:#3b3424">            </span><span style="color:#3db46e">[</span><span style="color:#f7931e;font-style:italic">-m</span><span style="color:#3b3424"> mark</span><span style="color:#3db46e">]</span><span style="color:#3b3424"> </span><span style="color:#3db46e">[</span><span style="color:#f7931e;font-style:italic">-M</span><span style="color:#3b3424"> pmtudisc_option</span><span style="color:#3db46e">]</span><span style="color:#3b3424"> </span><span style="color:#3db46e">[</span><span style="color:#f7931e;font-style:italic">-l</span><span style="color:#3b3424"> preload</span><span style="color:#3db46e">]</span><span style="color:#3b3424"> </span><span style="color:#3db46e">[</span><span style="color:#f7931e;font-style:italic">-p</span><span style="color:#3b3424"> pattern</span><span style="color:#3db46e">]</span><span style="color:#3b3424"> </span><span style="color:#3db46e">[</span><span style="color:#f7931e;font-style:italic">-Q</span><span style="color:#3b3424"> tos</span><span style="color:#3db46e">]</span></div>
<div class="t" style="left:434px;top:465px;font-size:28.5px;line-height:28.5px;color:#8d896f;transform:scaleX(0.9355);transform-origin:0 0;">[04:42:50]</div>
<div class="t" style="left:648.0px;top:465px;font-size:28.5px;line-height:28.5px;color:#3b9393;transform:scaleX(0.9355);transform-origin:0 0;">4</div>
<div class="t" style="left:704px;top:465px;font-size:28.5px;line-height:28.5px;color:#3b3424;transform:scaleX(0.9355);transform-origin:0 0"><span style="color:#3b3424">            </span><span style="color:#3db46e">[</span><span style="color:#f7931e;font-style:italic">-s</span><span style="color:#3b3424"> packetsize</span><span style="color:#3db46e">]</span><span style="color:#3b3424"> </span><span style="color:#3db46e">[</span><span style="color:#f7931e;font-style:italic">-S</span><span style="color:#3b3424"> sndbuf</span><span style="color:#3db46e">]</span><span style="color:#3b3424"> </span><span style="color:#3db46e">[</span><span style="color:#f7931e;font-style:italic">-t</span><span style="color:#3b3424"> ttl</span><span style="color:#3db46e">]</span><span style="color:#3b3424"> </span><span style="color:#3db46e">[</span><span style="color:#f7931e;font-style:italic">-T</span><span style="color:#3b3424"> timestamp_option</span><span style="color:#3db46e">]</span></div>
<div class="t" style="left:434px;top:504px;font-size:28.5px;line-height:28.5px;color:#8d896f;transform:scaleX(0.9355);transform-origin:0 0;">[04:42:50]</div>
<div class="t" style="left:648.0px;top:504px;font-size:28.5px;line-height:28.5px;color:#3b9393;transform:scaleX(0.9355);transform-origin:0 0;">5</div>
<div class="t" style="left:704px;top:504px;font-size:28.5px;line-height:28.5px;color:#3b3424;transform:scaleX(0.9355);transform-origin:0 0"><span style="color:#3b3424">            </span><span style="color:#3db46e">[</span><span style="color:#f7931e;font-style:italic">-w</span><span style="color:#3b3424"> deadline</span><span style="color:#3db46e">]</span><span style="color:#3b3424"> </span><span style="color:#3db46e">[</span><span style="color:#f7931e;font-style:italic">-W</span><span style="color:#3b3424"> timeout</span><span style="color:#3db46e">]</span><span style="color:#3b3424"> </span><span style="color:#3db46e">[</span><span style="color:#3b3424">hop1 ...</span><span style="color:#3db46e">]</span><span style="color:#3b3424"> destination</span></div>
<div style="position:absolute;left:815.7px;top:534.6px;width:62.0px;height:38px;background:#fbd757;border-radius:5px;box-shadow:inset 0 0 0 1px rgba(0,0,0,0.05)"></div>
<div class="t" style="left:434px;top:543px;font-size:28.5px;line-height:28.5px;color:#8d896f;transform:scaleX(0.9355);transform-origin:0 0;">[04:42:50]</div>
<div class="t" style="left:648.0px;top:543px;font-size:28.5px;line-height:28.5px;color:#3b9393;transform:scaleX(0.9355);transform-origin:0 0;">6</div>
<div class="t" style="left:704px;top:543px;font-size:28.5px;line-height:28.5px;color:#3b3424;transform:scaleX(0.9355);transform-origin:0 0"><span style="color:#3b3424">Usage</span><span style="color:#3aa57c">:</span><span style="color:#3b3424"> </span><span style="color:#3b3424">ping</span><span style="color:#3b3424"> </span><span style="color:#f7931e;font-style:italic">-6</span><span style="color:#3b3424"> </span><span style="color:#3db46e">[</span><span style="color:#f7931e;font-style:italic">-aAbBdDfhLnOqrRUvV</span><span style="color:#3db46e">]</span><span style="color:#3b3424"> </span><span style="color:#3db46e">[</span><span style="color:#f7931e;font-style:italic">-c</span><span style="color:#3b3424"> count</span><span style="color:#3db46e">]</span><span style="color:#3b3424"> </span><span style="color:#3db46e">[</span><span style="color:#f7931e;font-style:italic">-i</span><span style="color:#3b3424"> interval</span><span style="color:#3db46e">]</span><span style="color:#3b3424"> </span><span style="color:#3db46e">[</span><span style="color:#f7931e;font-style:italic">-I</span><span style="color:#3b3424"> interface</span><span style="color:#3db46e">]</span></div>
<div class="t" style="left:434px;top:582px;font-size:28.5px;line-height:28.5px;color:#8d896f;transform:scaleX(0.9355);transform-origin:0 0;">[04:42:50]</div>
<div class="t" style="left:648.0px;top:582px;font-size:28.5px;line-height:28.5px;color:#3b9393;transform:scaleX(0.9355);transform-origin:0 0;">7</div>
<div class="t" style="left:704px;top:582px;font-size:28.5px;line-height:28.5px;color:#3b3424;transform:scaleX(0.9355);transform-origin:0 0"><span style="color:#3b3424">             </span><span style="color:#3db46e">[</span><span style="color:#f7931e;font-style:italic">-l</span><span style="color:#3b3424"> preload</span><span style="color:#3db46e">]</span><span style="color:#3b3424"> </span><span style="color:#3db46e">[</span><span style="color:#f7931e;font-style:italic">-m</span><span style="color:#3b3424"> mark</span><span style="color:#3db46e">]</span><span style="color:#3b3424"> </span><span style="color:#3db46e">[</span><span style="color:#f7931e;font-style:italic">-M</span><span style="color:#3b3424"> pmtudisc_option</span><span style="color:#3db46e">]</span></div>
<div class="t" style="left:434px;top:621px;font-size:28.5px;line-height:28.5px;color:#8d896f;transform:scaleX(0.9355);transform-origin:0 0;">[04:42:50]</div>
<div class="t" style="left:648.0px;top:621px;font-size:28.5px;line-height:28.5px;color:#3b9393;transform:scaleX(0.9355);transform-origin:0 0;">8</div>
<div class="t" style="left:704px;top:621px;font-size:28.5px;line-height:28.5px;color:#3b3424;transform:scaleX(0.9355);transform-origin:0 0"><span style="color:#3b3424">             </span><span style="color:#3db46e">[</span><span style="color:#f7931e;font-style:italic">-N</span><span style="color:#3b3424"> nodeinfo_option</span><span style="color:#3db46e">]</span><span style="color:#3b3424"> </span><span style="color:#3db46e">[</span><span style="color:#f7931e;font-style:italic">-p</span><span style="color:#3b3424"> pattern</span><span style="color:#3db46e">]</span><span style="color:#3b3424"> </span><span style="color:#3db46e">[</span><span style="color:#f7931e;font-style:italic">-Q</span><span style="color:#3b3424"> tclass</span><span style="color:#3db46e">]</span><span style="color:#3b3424"> </span><span style="color:#3db46e">[</span><span style="color:#f7931e;font-style:italic">-s</span><span style="color:#3b3424"> packetsize</span><span style="color:#3db46e">]</span></div>
<div class="t" style="left:434px;top:660px;font-size:28.5px;line-height:28.5px;color:#8d896f;transform:scaleX(0.9355);transform-origin:0 0;">[04:42:50]</div>
<div class="t" style="left:648.0px;top:660px;font-size:28.5px;line-height:28.5px;color:#3b9393;transform:scaleX(0.9355);transform-origin:0 0;">9</div>
<div class="t" style="left:704px;top:660px;font-size:28.5px;line-height:28.5px;color:#3b3424;transform:scaleX(0.9355);transform-origin:0 0"><span style="color:#3b3424">             </span><span style="color:#3db46e">[</span><span style="color:#f7931e;font-style:italic">-S</span><span style="color:#3b3424"> sndbuf</span><span style="color:#3db46e">]</span><span style="color:#3b3424"> </span><span style="color:#3db46e">[</span><span style="color:#f7931e;font-style:italic">-t</span><span style="color:#3b3424"> ttl</span><span style="color:#3db46e">]</span><span style="color:#3b3424"> </span><span style="color:#3db46e">[</span><span style="color:#f7931e;font-style:italic">-T</span><span style="color:#3b3424"> timestamp_option</span><span style="color:#3db46e">]</span><span style="color:#3b3424"> </span><span style="color:#3db46e">[</span><span style="color:#f7931e;font-style:italic">-w</span><span style="color:#3b3424"> deadline</span><span style="color:#3db46e">]</span></div>
<div class="t" style="left:434px;top:699px;font-size:28.5px;line-height:28.5px;color:#8d896f;transform:scaleX(0.9355);transform-origin:0 0;">[04:42:50]</div>
<div class="t" style="left:632.0px;top:699px;font-size:28.5px;line-height:28.5px;color:#3b9393;transform:scaleX(0.9355);transform-origin:0 0;">10</div>
<div class="t" style="left:704px;top:699px;font-size:28.5px;line-height:28.5px;color:#3b3424;transform:scaleX(0.9355);transform-origin:0 0"><span style="color:#3b3424">             </span><span style="color:#3db46e">[</span><span style="color:#f7931e;font-style:italic">-W</span><span style="color:#3b3424"> timeout</span><span style="color:#3db46e">]</span><span style="color:#3b3424"> destination</span></div>
<div style="position:absolute;left:704px;top:729px;width:1397px;height:39px;background:#eff3d3"></div>
<div style="position:absolute;left:703.7px;top:729.6px;width:62.0px;height:38px;background:#cfcdb1;border-radius:5px;box-shadow:inset 0 0 0 1px rgba(0,0,0,0.05)"></div>
<div class="t" style="left:434px;top:738px;font-size:28.5px;line-height:28.5px;color:#8d896f;transform:scaleX(0.9355);transform-origin:0 0;">[04:42:53]</div>
<div class="t" style="left:632.0px;top:738px;font-size:28.5px;line-height:28.5px;color:#3b9393;transform:scaleX(0.9355);transform-origin:0 0;">11</div>
<div class="t" style="left:704px;top:738px;font-size:28.5px;line-height:28.5px;color:#3b3424;transform:scaleX(0.9355);transform-origin:0 0"><span style="color:#2bc62b">king@MACBOOK</span><span style="color:#333">:</span><span style="color:#1a1ae6">~</span><span style="color:#5a66b4">$</span><span style="color:#333"> </span><span style="color:#3a8ee6">ll</span><span style="color:#333"> .ssh</span></div>
<div class="t" style="left:434px;top:777px;font-size:28.5px;line-height:28.5px;color:#8d896f;transform:scaleX(0.9355);transform-origin:0 0;">[04:42:53]</div>
<div class="t" style="left:632.0px;top:777px;font-size:28.5px;line-height:28.5px;color:#3b9393;transform:scaleX(0.9355);transform-origin:0 0;">12</div>
<div class="t" style="left:704px;top:777px;font-size:28.5px;line-height:28.5px;color:#3b3424;transform:scaleX(0.9355);transform-origin:0 0"><span style="color:#3b3424">total </span><span style="color:#e39bc9">0</span></div>
<div style="position:absolute;left:704px;top:807px;width:1397px;height:39px;background:#f3ead8"></div>
<div style="position:absolute;left:911.7px;top:807.6px;width:62.0px;height:38px;background:#cdc6b0;border-radius:5px;box-shadow:inset 0 0 0 1px rgba(0,0,0,0.05)"></div>
<div style="position:absolute;left:991.7px;top:807.6px;width:62.0px;height:38px;background:#cdc6b0;border-radius:5px;box-shadow:inset 0 0 0 1px rgba(0,0,0,0.05)"></div>
<div class="t" style="left:434px;top:816px;font-size:28.5px;line-height:28.5px;color:#8d896f;transform:scaleX(0.9355);transform-origin:0 0;">[04:42:53]</div>
<div class="t" style="left:632.0px;top:816px;font-size:28.5px;line-height:28.5px;color:#3b9393;transform:scaleX(0.9355);transform-origin:0 0;">13</div>
<div class="t" style="left:704px;top:816px;font-size:28.5px;line-height:28.5px;color:#3b3424;transform:scaleX(0.9355);transform-origin:0 0"><span style="color:#c06fd0">d</span><span style="color:#7592c6">r</span><span style="color:#d9a11e">w</span><span style="color:#ff4b1f">x</span><span style="color:#3fb16f">-</span><span style="color:#3fb16f">-</span><span style="color:#3fb16f">-</span><span style="color:#3fb16f">-</span><span style="color:#3fb16f">-</span><span style="color:#3fb16f">-</span><span style="color:#3b3424"> </span><span style="color:#e39bc9">1</span><span style="color:#3b3424"> king king </span><span style="color:#e39bc9">4096</span><span style="color:#3b3424"> </span><span style="color:#31ad95">Jul</span><span style="color:#3b3424"> </span><span style="color:#e39bc9">30</span><span style="color:#3b3424"> </span><span style="color:#31ad95">06:53</span><span style="color:#3b3424"> </span><span style="color:#2020e6">.</span><span style="color:#3b3424">/</span></div>
<div style="position:absolute;left:911.7px;top:846.6px;width:62.0px;height:38px;background:#d3ccb3;border-radius:5px;box-shadow:inset 0 0 0 1px rgba(0,0,0,0.05)"></div>
<div style="position:absolute;left:991.7px;top:846.6px;width:62.0px;height:38px;background:#d3ccb3;border-radius:5px;box-shadow:inset 0 0 0 1px rgba(0,0,0,0.05)"></div>
<div class="t" style="left:434px;top:855px;font-size:28.5px;line-height:28.5px;color:#8d896f;transform:scaleX(0.9355);transform-origin:0 0;">[04:42:53]</div>
<div class="t" style="left:632.0px;top:855px;font-size:28.5px;line-height:28.5px;color:#3b9393;transform:scaleX(0.9355);transform-origin:0 0;">14</div>
<div class="t" style="left:704px;top:855px;font-size:28.5px;line-height:28.5px;color:#3b3424;transform:scaleX(0.9355);transform-origin:0 0"><span style="color:#c06fd0">d</span><span style="color:#7592c6">r</span><span style="color:#d9a11e">w</span><span style="color:#ff4b1f">x</span><span style="color:#7592c6">r</span><span style="color:#3fb16f">-</span><span style="color:#ff4b1f">x</span><span style="color:#7592c6">r</span><span style="color:#3fb16f">-</span><span style="color:#ff4b1f">x</span><span style="color:#3b3424"> </span><span style="color:#e39bc9">1</span><span style="color:#3b3424"> king king </span><span style="color:#e39bc9">4096</span><span style="color:#3b3424"> </span><span style="color:#31ad95">Oct</span><span style="color:#3b3424"> </span><span style="color:#e39bc9">18</span><span style="color:#3b3424"> </span><span style="color:#31ad95">20:09</span><span style="color:#3b3424"> </span><span style="color:#2020e6">..</span><span style="color:#3b3424">/</span></div>
<div style="position:absolute;left:911.7px;top:885.6px;width:62.0px;height:38px;background:#d3ccb3;border-radius:5px;box-shadow:inset 0 0 0 1px rgba(0,0,0,0.05)"></div>
<div style="position:absolute;left:991.7px;top:885.6px;width:62.0px;height:38px;background:#d3ccb3;border-radius:5px;box-shadow:inset 0 0 0 1px rgba(0,0,0,0.05)"></div>
<div class="t" style="left:434px;top:894px;font-size:28.5px;line-height:28.5px;color:#8d896f;transform:scaleX(0.9355);transform-origin:0 0;">[04:42:53]</div>
<div class="t" style="left:632.0px;top:894px;font-size:28.5px;line-height:28.5px;color:#3b9393;transform:scaleX(0.9355);transform-origin:0 0;">15</div>
<div class="t" style="left:704px;top:894px;font-size:28.5px;line-height:28.5px;color:#3b3424;transform:scaleX(0.9355);transform-origin:0 0"><span style="color:#3fb16f">-</span><span style="color:#7592c6">r</span><span style="color:#d9a11e">w</span><span style="color:#3fb16f">-</span><span style="color:#7592c6">r</span><span style="color:#3fb16f">-</span><span style="color:#3fb16f">-</span><span style="color:#7592c6">r</span><span style="color:#3fb16f">-</span><span style="color:#3fb16f">-</span><span style="color:#3b3424"> </span><span style="color:#e39bc9">1</span><span style="color:#3b3424"> king king </span><span style="color:#e39bc9"> 381</span><span style="color:#3b3424"> </span><span style="color:#31ad95">Jul</span><span style="color:#3b3424"> </span><span style="color:#e39bc9">28</span><span style="color:#3b3424"> </span><span style="color:#31ad95">04:04</span><span style="color:#3b3424"> </span><span style="color:#3b3424">authorized_keys</span></div>
<div style="position:absolute;left:911.7px;top:924.6px;width:62.0px;height:38px;background:#d3ccb3;border-radius:5px;box-shadow:inset 0 0 0 1px rgba(0,0,0,0.05)"></div>
<div style="position:absolute;left:991.7px;top:924.6px;width:62.0px;height:38px;background:#d3ccb3;border-radius:5px;box-shadow:inset 0 0 0 1px rgba(0,0,0,0.05)"></div>
<div class="t" style="left:434px;top:933px;font-size:28.5px;line-height:28.5px;color:#8d896f;transform:scaleX(0.9355);transform-origin:0 0;">[04:42:53]</div>
<div class="t" style="left:632.0px;top:933px;font-size:28.5px;line-height:28.5px;color:#3b9393;transform:scaleX(0.9355);transform-origin:0 0;">16</div>
<div class="t" style="left:704px;top:933px;font-size:28.5px;line-height:28.5px;color:#3b3424;transform:scaleX(0.9355);transform-origin:0 0"><span style="color:#3fb16f">-</span><span style="color:#7592c6">r</span><span style="color:#d9a11e">w</span><span style="color:#3fb16f">-</span><span style="color:#7592c6">r</span><span style="color:#3fb16f">-</span><span style="color:#3fb16f">-</span><span style="color:#7592c6">r</span><span style="color:#3fb16f">-</span><span style="color:#3fb16f">-</span><span style="color:#3b3424"> </span><span style="color:#e39bc9">1</span><span style="color:#3b3424"> king king </span><span style="color:#e39bc9"> 664</span><span style="color:#3b3424"> </span><span style="color:#31ad95">Jul</span><span style="color:#3b3424"> </span><span style="color:#e39bc9">29</span><span style="color:#3b3424"> </span><span style="color:#31ad95">16:25</span><span style="color:#3b3424"> </span><span style="color:#3b3424">known_hosts</span></div>
<div style="position:absolute;left:668px;top:350px;width:18px;height:17.5px;border:1.6px solid #c3bd9f;border-radius:2.5px;box-sizing:border-box;background:transparent"></div>
<div style="position:absolute;left:671px;top:358.1px;width:12px;height:1.4px;background:#c3bd9f"></div>
<div style="position:absolute;left:676.5px;top:367px;width:1.3px;height:342px;background:#c3bd9f"></div>
<div style="position:absolute;left:676.5px;top:708px;width:8.5px;height:1.3px;background:#c3bd9f"></div>
<div style="position:absolute;left:668px;top:740px;width:18px;height:17.5px;border:1.6px solid #9cc9ef;border-radius:2.5px;box-sizing:border-box;background:transparent"></div>
<div style="position:absolute;left:671px;top:748.1px;width:12px;height:1.4px;background:#3390ee"></div>
<div style="position:absolute;left:676.2px;top:757px;width:1.8px;height:187px;background:#3390ee"></div>
<div style="position:absolute;left:676.2px;top:943px;width:8.8px;height:1.8px;background:#3390ee"></div>
<div style="position:absolute;left:427px;top:963px;width:1674px;height:2px;background:#b5b5b5"></div>
<div style="position:absolute;left:427px;top:965px;width:1674px;height:106px;overflow:hidden;background:#fff">
<div style="position:absolute;left:-427px;top:-965px;width:2560px;height:1520px">
<div style="position:absolute;left:704px;top:933px;width:1397px;height:39px;background:#eef8ee"></div>
<div style="position:absolute;left:703.7px;top:933.6px;width:62.0px;height:38px;background:#c9cdc7;border-radius:5px;box-shadow:inset 0 0 0 1px rgba(0,0,0,0.05)"></div>
<div class="t" style="left:434px;top:942px;font-size:28.5px;line-height:28.5px;color:#808080;transform:scaleX(0.9355);transform-origin:0 0;">[04:43:03]</div>
<div class="t" style="left:632.0px;top:942px;font-size:28.5px;line-height:28.5px;color:#2b8db3;transform:scaleX(0.9355);transform-origin:0 0;">19</div>
<div class="t" style="left:704px;top:942px;font-size:28.5px;line-height:28.5px;color:#2a2a33;transform:scaleX(0.9355);transform-origin:0 0"><span style="color:#2bc62b">king@MACBOOK</span><span style="color:#333">:</span><span style="color:#1a1ae6">~</span><span style="color:#5a66b4">$</span></div>
<div style="position:absolute;left:704px;top:972px;width:1397px;height:39px;background:#eef8ee"></div>
<div style="position:absolute;left:703.7px;top:972.6px;width:62.0px;height:38px;background:#c9cdc7;border-radius:5px;box-shadow:inset 0 0 0 1px rgba(0,0,0,0.05)"></div>
<div class="t" style="left:434px;top:981px;font-size:28.5px;line-height:28.5px;color:#808080;transform:scaleX(0.9355);transform-origin:0 0;">[04:43:03]</div>
<div class="t" style="left:632.0px;top:981px;font-size:28.5px;line-height:28.5px;color:#2b8db3;transform:scaleX(0.9355);transform-origin:0 0;">20</div>
<div class="t" style="left:704px;top:981px;font-size:28.5px;line-height:28.5px;color:#2a2a33;transform:scaleX(0.9355);transform-origin:0 0"><span style="color:#2bc62b">king@MACBOOK</span><span style="color:#333">:</span><span style="color:#1a1ae6">~</span><span style="color:#5a66b4">$</span></div>
<div style="position:absolute;left:427px;top:1011px;width:275px;height:39px;background:#efeff8"></div>
<div style="position:absolute;left:704px;top:1011px;width:1397px;height:39px;background:#f7fdf5"></div>
<div style="position:absolute;left:703.7px;top:1011.6px;width:62.0px;height:38px;background:#c9cdc7;border-radius:5px;box-shadow:inset 0 0 0 1px rgba(0,0,0,0.05)"></div>
<div class="t" style="left:434px;top:1020px;font-size:28.5px;line-height:28.5px;color:#ff1493;transform:scaleX(0.9355);transform-origin:0 0;">[04:43:03]</div>
<div class="t" style="left:632.0px;top:1020px;font-size:28.5px;line-height:28.5px;color:#ff1493;transform:scaleX(0.9355);transform-origin:0 0;">21</div>
<div class="t" style="left:704px;top:1020px;font-size:28.5px;line-height:28.5px;color:#2a2a33;transform:scaleX(0.9355);transform-origin:0 0"><span style="color:#2bc62b">king@MACBOOK</span><span style="color:#333">:</span><span style="color:#1a1ae6">~</span><span style="color:#5a66b4">$</span></div>
<div style="position:absolute;left:961.0px;top:1012px;width:15px;height:37px;border:2px solid #f7b23b;border-radius:2px;box-sizing:border-box"></div>
</div></div>
<div style="position:absolute;left:2101px;top:231px;width:32px;height:840px;background:#f4f4f4"></div>
<div style="position:absolute;left:2112px;top:231px;width:10px;height:40px;background:#c8b469"></div>
<div style="position:absolute;left:2112px;top:271px;width:10px;height:40px;background:#f9d657"></div>
<div style="position:absolute;left:2112px;top:431px;width:10px;height:40px;background:#f9d657"></div>
<div style="position:absolute;left:2112px;top:631px;width:10px;height:40px;background:#c6c6c6"></div>
<div style="position:absolute;left:2112px;top:711px;width:10px;height:360px;background:#c6c6c6"></div>
<div style="position:absolute;left:2133px;top:108px;width:1px;height:964px;background:#c4c4c4"></div>
<div style="position:absolute;left:2156px;top:124px;width:12px;height:12px;background:#1e8ff5"></div>
<div class="t" style="left:2182px;top:121px;font-size:25.8px;line-height:25.8px;color:#222;transform:scaleX(0.904);transform-origin:0 0;">Session</div>
<svg style="position:absolute;left:2495px;top:120px;" width="24" height="24" viewBox="0 0 24 24"><circle cx="12" cy="12" r="5.6" fill="none" stroke="#000" stroke-width="1.9"/><path d="M18.00 12.00 L22.00 12.00 M16.24 16.24 L19.07 19.07 M12.00 18.00 L12.00 22.00 M7.76 16.24 L4.93 19.07 M6.00 12.00 L2.00 12.00 M7.76 7.76 L4.93 4.93 M12.00 6.00 L12.00 2.00 M16.24 7.76 L19.07 4.93" stroke="#000" stroke-width="2.3"/></svg>
<svg style="position:absolute;left:2532px;top:122px;" width="20" height="20" viewBox="0 0 20 20"><path d="M3.7 3.7 L16.3 16.3 M16.3 3.7 L3.7 16.3" stroke="#000" stroke-width="2"/></svg>
<div class="t" style="left:2153px;top:181px;font-size:25.8px;line-height:25.8px;color:#9a9a9a;transform:scaleX(0.904);transform-origin:0 0;font-style:italic">Filter</div>
<div style="position:absolute;left:2146px;top:214px;width:402px;height:1px;background:#bdbdbd"></div>
<div style="position:absolute;left:2134px;top:273px;width:426px;height:46px;background:#e3e3e3"></div>
<svg style="position:absolute;left:2145px;top:244px;" width="18" height="12" viewBox="0 0 18 12"><path d="M1 1 H17 L9 10 Z" fill="#7a7a7a"/></svg>
<svg style="position:absolute;left:2178px;top:237px;" width="22" height="28" viewBox="0 0 22 28"><defs><linearGradient id="fg" x1="0" y1="0" x2="1" y2="1"><stop offset="0" stop-color="#fbe08a"/><stop offset="1" stop-color="#eebf4e"/></linearGradient></defs><path d="M6.5 1 H19.5 V23 H6.5 Z" fill="url(#fg)"/><path d="M1 1 L7 4 V27 L1 24 Z" fill="#fde9a8"/></svg>
<div class="t" style="left:2213px;top:240px;font-size:25.8px;line-height:25.8px;color:#333;transform:scaleX(0.904);transform-origin:0 0;">Putty sessions</div>
<div style="position:absolute;left:2221px;top:287px;width:18px;height:18px;border-radius:50%;background:#ff1493"></div>
<div class="t" style="left:2253px;top:286px;font-size:25.8px;line-height:25.8px;color:#333;transform:scaleX(0.904);transform-origin:0 0;">Local SSH</div>
<div style="position:absolute;left:2222px;top:334px;width:16px;height:16px;background:#1e8ff5"></div>
<div class="t" style="left:2253px;top:332px;font-size:25.8px;line-height:25.8px;color:#333;transform:scaleX(0.904);transform-origin:0 0;">Local Telnet</div>
<svg style="position:absolute;left:2145px;top:383px;" width="18" height="12" viewBox="0 0 18 12"><path d="M1 1 H17 L9 10 Z" fill="#7a7a7a"/></svg>
<svg style="position:absolute;left:2178px;top:376px;" width="22" height="28" viewBox="0 0 22 28"><defs><linearGradient id="fg" x1="0" y1="0" x2="1" y2="1"><stop offset="0" stop-color="#fbe08a"/><stop offset="1" stop-color="#eebf4e"/></linearGradient></defs><path d="M6.5 1 H19.5 V23 H6.5 Z" fill="url(#fg)"/><path d="M1 1 L7 4 V27 L1 24 Z" fill="#fde9a8"/></svg>
<div class="t" style="left:2213px;top:378px;font-size:25.8px;line-height:25.8px;color:#333;transform:scaleX(0.904);transform-origin:0 0;">Shell sessions</div>
<svg style="position:absolute;left:2215px;top:424px;" width="30" height="20" viewBox="0 0 30 20"><rect x="0" y="0" width="30" height="20" fill="#b8b8b8"/><rect x="1.8" y="0.8" width="26.4" height="18.4" fill="#464241"/><path d="M10.2 7.4 Q10.2 5.6 7.8 5.6 Q5.2 5.6 5.2 10 Q5.2 14.4 7.8 14.4 Q10.2 14.4 10.2 12.6" fill="none" stroke="#fff" stroke-width="2.2"/><rect x="11.3" y="7.3" width="2" height="2" fill="#fff"/><rect x="11.3" y="12.4" width="2" height="2" fill="#fff"/><path d="M14.6 5.4 L17.8 14.2" stroke="#fff" stroke-width="1.3"/><rect x="18.6" y="13.2" width="7" height="1.3" fill="#fff"/></svg>
<div class="t" style="left:2253px;top:424px;font-size:25.8px;line-height:25.8px;color:#333;transform:scaleX(0.904);transform-origin:0 0;">cmd</div>
<svg style="position:absolute;left:2215px;top:470px;" width="31" height="21" viewBox="0 0 31 21"><path d="M5.6 0.3 H29.6 Q31 0.3 30.5 1.8 L25.7 18.5 Q25.3 19.7 24 19.7 H1.4 Q0 19.7 0.4 18.2 L4.6 1.5 Q4.9 0.3 5.6 0.3 Z" fill="#1870bf"/><path d="M10.4 3.1 L17.4 9.8 L6.5 16.2" fill="none" stroke="#fff" stroke-width="2.3" stroke-linecap="round" stroke-linejoin="round"/><path d="M14.6 15.9 H20.4" stroke="#fff" stroke-width="2.2" stroke-linecap="round"/></svg>
<div class="t" style="left:2253px;top:470px;font-size:25.8px;line-height:25.8px;color:#333;transform:scaleX(0.904);transform-origin:0 0;">powershell</div>
<svg style="position:absolute;left:2215px;top:516px;" width="31" height="21" viewBox="0 0 31 21"><path d="M5.6 0.3 H29.6 Q31 0.3 30.5 1.8 L25.7 18.5 Q25.3 19.7 24 19.7 H1.4 Q0 19.7 0.4 18.2 L4.6 1.5 Q4.9 0.3 5.6 0.3 Z" fill="#1870bf"/><path d="M10.4 3.1 L17.4 9.8 L6.5 16.2" fill="none" stroke="#fff" stroke-width="2.3" stroke-linecap="round" stroke-linejoin="round"/><path d="M14.6 15.9 H20.4" stroke="#fff" stroke-width="2.2" stroke-linecap="round"/></svg>
<div class="t" style="left:2253px;top:516px;font-size:25.8px;line-height:25.8px;color:#333;transform:scaleX(0.904);transform-origin:0 0;">powershell 6|7</div>
<svg style="position:absolute;left:2215px;top:557px;" width="30" height="30" viewBox="0 0 30 30"><circle cx="15" cy="15" r="15" fill="#dd4a26"/><circle cx="15" cy="15" r="7" fill="none" stroke="#fff" stroke-width="3.1"/><path d="M19.80 15.00 L24.40 15.00" stroke="#dd4a26" stroke-width="1.1"/><path d="M12.60 19.16 L10.30 23.14" stroke="#dd4a26" stroke-width="1.1"/><path d="M12.60 10.84 L10.30 6.86" stroke="#dd4a26" stroke-width="1.1"/><circle cx="4.40" cy="15.00" r="3.6" fill="#dd4a26"/><circle cx="4.40" cy="15.00" r="2.2" fill="#fff"/><circle cx="20.62" cy="6.01" r="3.6" fill="#dd4a26"/><circle cx="20.62" cy="6.01" r="2.2" fill="#fff"/><circle cx="20.62" cy="23.99" r="3.6" fill="#dd4a26"/><circle cx="20.62" cy="23.99" r="2.2" fill="#fff"/></svg>
<div class="t" style="left:2253px;top:562px;font-size:25.8px;line-height:25.8px;color:#333;transform:scaleX(0.904);transform-origin:0 0;">Ubuntu</div>
<div style="position:absolute;left:2134px;top:606px;width:426px;height:1px;background:#c4c4c4"></div>
<div style="position:absolute;left:2156px;top:624px;width:12px;height:12px;background:#a4dcf5"></div>
<div class="t" style="left:2182px;top:621px;font-size:25.8px;line-height:25.8px;color:#222;transform:scaleX(0.904);transform-origin:0 0;">Outline</div>
<svg style="position:absolute;left:2495px;top:620px;" width="24" height="24" viewBox="0 0 24 24"><circle cx="12" cy="12" r="5.6" fill="none" stroke="#000" stroke-width="1.9"/><path d="M18.00 12.00 L22.00 12.00 M16.24 16.24 L19.07 19.07 M12.00 18.00 L12.00 22.00 M7.76 16.24 L4.93 19.07 M6.00 12.00 L2.00 12.00 M7.76 7.76 L4.93 4.93 M12.00 6.00 L12.00 2.00 M16.24 7.76 L19.07 4.93" stroke="#000" stroke-width="2.3"/></svg>
<svg style="position:absolute;left:2532px;top:622px;" width="20" height="20" viewBox="0 0 20 20"><path d="M3.7 3.7 L16.3 16.3 M16.3 3.7 L3.7 16.3" stroke="#000" stroke-width="2"/></svg>
<div class="t" style="left:2153px;top:680px;font-size:25.8px;line-height:25.8px;color:#9a9a9a;transform:scaleX(0.904);transform-origin:0 0;font-style:italic">Filter</div>
<div style="position:absolute;left:2146px;top:714px;width:402px;height:1px;background:#bdbdbd"></div>
<div style="position:absolute;left:2185px;top:745px;width:10px;height:10px;border-radius:50%;background:#5f8ff0"></div>
<div class="t" style="left:2214px;top:739px;font-size:25.8px;line-height:25.8px;color:#333;transform:scaleX(0.904);transform-origin:0 0;">ping</div>
<div style="position:absolute;left:2134px;top:773px;width:426px;height:46px;background:#d8d8d8"></div>
<div style="position:absolute;left:2185px;top:791px;width:10px;height:10px;border-radius:50%;background:#5f8ff0"></div>
<div class="t" style="left:2214px;top:786px;font-size:25.8px;line-height:25.8px;color:#333;transform:scaleX(0.904);transform-origin:0 0;">ll</div>
<div style="position:absolute;left:2185px;top:837px;width:10px;height:10px;border-radius:50%;background:#5f8ff0"></div>
<div class="t" style="left:2214px;top:832px;font-size:25.8px;line-height:25.8px;color:#333;transform:scaleX(0.904);transform-origin:0 0;">...</div>
<div style="position:absolute;left:2243px;top:766px;width:297px;height:93px;background:#ffffe1;box-shadow:3px 3px 3px rgba(0,0,0,0.35)"></div>
<div class="t" style="left:2258px;top:787px;font-size:25.8px;line-height:25.8px;color:#000;transform:scaleX(0.904);transform-origin:0 0;">ping</div>
<div class="t" style="left:2258px;top:817px;font-size:25.8px;line-height:25.8px;color:#000;transform:scaleX(0.904);transform-origin:0 0;">2020-10-19 04:42:48</div>
<div style="position:absolute;left:22px;top:1089px;width:12px;height:12px;background:#9370db"></div>
<div class="t" style="left:48px;top:1086px;font-size:25.8px;line-height:25.8px;color:#222;transform:scaleX(0.904);transform-origin:0 0;">Sender</div>
<svg style="position:absolute;left:2495px;top:1084.7px;" width="24" height="24" viewBox="0 0 24 24"><circle cx="12" cy="12" r="5.6" fill="none" stroke="#000" stroke-width="1.9"/><path d="M18.00 12.00 L22.00 12.00 M16.24 16.24 L19.07 19.07 M12.00 18.00 L12.00 22.00 M7.76 16.24 L4.93 19.07 M6.00 12.00 L2.00 12.00 M7.76 7.76 L4.93 4.93 M12.00 6.00 L12.00 2.00 M16.24 7.76 L19.07 4.93" stroke="#000" stroke-width="2.3"/></svg>
<svg style="position:absolute;left:2532px;top:1086.7px;" width="20" height="20" viewBox="0 0 20 20"><path d="M3.7 3.7 L16.3 16.3 M16.3 3.7 L3.7 16.3" stroke="#000" stroke-width="2"/></svg>
<svg style="position:absolute;left:24px;top:1142px;" width="20" height="26" viewBox="0 0 20 26"><path d="M2 1.2 L16.3 12 L2 22.9 Z" fill="#008000"/></svg>
<div style="position:absolute;left:69px;top:1147px;width:17px;height:17px;background:#666"></div>
<svg style="position:absolute;left:113px;top:1143px;" width="22" height="22" viewBox="0 0 22 22"><path d="M11 3 V19 M3 11 H19" stroke="#000" stroke-width="2.2"/></svg>
<div style="position:absolute;left:162px;top:1153px;width:16px;height:2px;background:#000"></div>
<svg style="position:absolute;left:206px;top:1144px;" width="20" height="20" viewBox="0 0 20 20"><path d="M3 3 L17 17 M17 3 L3 17" stroke="#000" stroke-width="2"/></svg>
<div style="position:absolute;left:242px;top:1135px;width:1px;height:39px;background:#555"></div>
<svg style="position:absolute;left:280px;top:1141.3px;" width="26" height="26" viewBox="0 0 26 26"><circle cx="13" cy="13" r="12.1" fill="#fff" stroke="#000" stroke-width="1.5"/><circle cx="13" cy="13" r="7" fill="#000"/></svg>
<div class="t" style="left:322px;top:1145px;font-size:25.8px;line-height:25.8px;color:#333;transform:scaleX(0.904);transform-origin:0 0;"><u>T</u>ext</div>
<svg style="position:absolute;left:392px;top:1141.3px;" width="26" height="26" viewBox="0 0 26 26"><circle cx="13" cy="13" r="12.1" fill="#fff" stroke="#000" stroke-width="1.5"/></svg>
<div class="t" style="left:434px;top:1145px;font-size:25.8px;line-height:25.8px;color:#333;transform:scaleX(0.904);transform-origin:0 0;"><u>H</u>ex</div>
<div class="t" style="left:496px;top:1145px;font-size:25.8px;line-height:25.8px;color:#333;transform:scaleX(0.904);transform-origin:0 0;">By:</div>
<svg style="position:absolute;left:564px;top:1141.3px;" width="26" height="26" viewBox="0 0 26 26"><circle cx="13" cy="13" r="12.1" fill="#fff" stroke="#000" stroke-width="1.5"/><circle cx="13" cy="13" r="7" fill="#000"/></svg>
<div class="t" style="left:606px;top:1145px;font-size:25.8px;line-height:25.8px;color:#333;transform:scaleX(0.904);transform-origin:0 0;"><u>L</u>ine</div>
<svg style="position:absolute;left:676px;top:1141.3px;" width="26" height="26" viewBox="0 0 26 26"><circle cx="13" cy="13" r="12.1" fill="#fff" stroke="#000" stroke-width="1.5"/></svg>
<div class="t" style="left:718px;top:1145px;font-size:25.8px;line-height:25.8px;color:#333;transform:scaleX(0.904);transform-origin:0 0;"><u>C</u>har</div>
<div class="t" style="left:794px;top:1145px;font-size:25.8px;line-height:25.8px;color:#333;transform:scaleX(0.904);transform-origin:0 0;"><u>C</u>ount:</div>
<div style="position:absolute;left:891px;top:1134px;width:130px;height:42px;background:#fff;border:1px solid #cfcfcf;box-sizing:border-box"></div>
<div class="t" style="left:897px;top:1145px;font-size:25.8px;line-height:25.8px;color:#333;transform:scaleX(0.904);transform-origin:0 0;">∞</div>
<svg style="position:absolute;left:997px;top:1140px;" width="18" height="28" viewBox="0 0 18 28"><path d="M1 9 L9 1 L17 9 Z" fill="#6a6a6a"/><path d="M1 18 L9 26 L17 18 Z" fill="#6a6a6a"/></svg>
<div class="t" style="left:1040px;top:1145px;font-size:25.8px;line-height:25.8px;color:#333;transform:scaleX(0.904);transform-origin:0 0;"><u>I</u>nterval:</div>
<div style="position:absolute;left:1179px;top:1134px;width:172px;height:42px;background:#fff;border:1px solid #cfcfcf;box-sizing:border-box"></div>
<div class="t" style="left:1185px;top:1145px;font-size:25.8px;line-height:25.8px;color:#333;transform:scaleX(0.904);transform-origin:0 0;">1.00s</div>
<svg style="position:absolute;left:1327px;top:1140px;" width="18" height="28" viewBox="0 0 18 28"><path d="M1 9 L9 1 L17 9 Z" fill="#6a6a6a"/><path d="M1 18 L9 26 L17 18 Z" fill="#6a6a6a"/></svg>
<div class="t" style="left:1370px;top:1145px;font-size:25.8px;line-height:25.8px;color:#333;transform:scaleX(0.904);transform-origin:0 0;"><u>T</u>argets:</div>
<div style="position:absolute;left:1495px;top:1134px;width:229px;height:42px;background:#fff;border:1px solid #cfcfcf;box-sizing:border-box"></div>
<div class="t" style="left:1499px;top:1145px;font-size:25.8px;line-height:25.8px;color:#333;transform:scaleX(0.904);transform-origin:0 0;">Current</div>
<svg style="position:absolute;left:1700px;top:1150px;" width="18" height="11" viewBox="0 0 18 11"><path d="M1 1 H17 L9 10 Z" fill="#6a6a6a"/></svg>
<div style="position:absolute;left:0px;top:1189px;width:2560px;height:1px;background:#c8c8c8"></div>
<div style="position:absolute;left:0px;top:1190px;width:2560px;height:144px;background:#fff"></div>
<div style="position:absolute;left:164px;top:1191px;width:142px;height:37px;background:#d0d0d0;border-radius:4px"></div>
<div class="t" style="left:28px;top:1200px;font-size:28.5px;line-height:28.5px;color:#ff1493;transform:scaleX(0.9355);transform-origin:0 0;">1</div>
<div class="t" style="left:82.5px;top:1200px;font-size:28.5px;line-height:28.5px;color:#333;transform:scaleX(0.9355);transform-origin:0 0;">ping localhost</div>
<div style="position:absolute;left:0px;top:1334px;width:2560px;height:2px;background:#c2c2c2"></div>
<div class="t" style="left:25px;top:1369px;font-size:25.8px;line-height:25.8px;color:#333;transform:scaleX(0.904);transform-origin:0 0;"><u>F</u>ind:</div>
<div style="position:absolute;left:114px;top:1356px;width:2067px;height:46px;background:#fff;border:1px solid #cfcfcf;box-sizing:border-box"></div>
<div class="t" style="left:121px;top:1369px;font-size:25.8px;line-height:25.8px;color:#333;transform:scaleX(0.904);transform-origin:0 0;">ping</div>
<div style="position:absolute;left:2039px;top:1357px;width:104px;height:44px;background:#efefef"></div>
<svg style="position:absolute;left:1846px;top:1360px;" width="36" height="36" viewBox="0 0 36 36"><circle cx="8.2" cy="28.7" r="2.6" fill="#222"/><path d="M23 13 V6.5 M23 13 L16.3 10.8 M23 13 L29.7 10.8 M23 13 L18.8 19.6 M23 13 L27.2 19.6" stroke="#222" stroke-width="2.6" stroke-linecap="butt"/></svg>
<svg style="position:absolute;left:1898px;top:1362px;" width="34" height="32" viewBox="0 0 34 32"><text x="0" y="29" font-family="Liberation Sans" font-size="33" fill="#222" transform="scale(0.72 1)" textLength="40">Aa</text></svg>
<svg style="position:absolute;left:1949px;top:1362px;" width="30" height="32" viewBox="0 0 30 32"><path d="M3.5 5 L8.8 25.5 L15 7.5 L21.2 25.5 L26.5 5" fill="none" stroke="#222" stroke-width="2.1"/><rect x="3" y="28" width="24" height="2" fill="#222"/></svg>
<svg style="position:absolute;left:1999px;top:1365px;" width="30" height="28" viewBox="0 0 30 28"><rect x="1.8" y="1.8" width="26" height="24.8" rx="4" fill="none" stroke="#222" stroke-width="2"/><path d="M4 10.6 H23.4 M4 17.4 H23.4" stroke="#222" stroke-width="2"/></svg>
<svg style="position:absolute;left:2056px;top:1366px;" width="18" height="26" viewBox="0 0 18 26"><path d="M2.5 2.3 H15.5 M2.5 23.7 H15.5" stroke="#111" stroke-width="2.5"/><path d="M9 2.3 V23.7" stroke="#111" stroke-width="3"/></svg>
<svg style="position:absolute;left:2101px;top:1363px;" width="32" height="32" viewBox="0 0 32 32"><path d="M10.7 25.2 H6.5 Q3.5 25.2 3.5 22.2 V10.9 Q3.5 7.9 6.5 7.9 H17" fill="none" stroke="#111" stroke-width="2.1"/><path d="M12.1 2.6 L17.2 7.9 L12.1 13" fill="none" stroke="#111" stroke-width="2.1"/><path d="M21.5 7.2 H25.7 Q28.7 7.2 28.7 10.2 V21.8 Q28.7 24.8 25.7 24.8 H15" fill="none" stroke="#111" stroke-width="2.1"/><path d="M20 19.4 L15 24.8 L20 30" fill="none" stroke="#111" stroke-width="2.1"/></svg>
<svg style="position:absolute;left:2151px;top:1372px;" width="22" height="14" viewBox="0 0 22 14"><path d="M3 3 L11 11 L19 3" fill="none" stroke="#222" stroke-width="2.2"/></svg>
<div style="position:absolute;left:2193px;top:1356px;width:83px;height:46px;background:linear-gradient(#fbfbfb,#ececec);border:1px solid #c4c4c4;border-radius:3px;box-sizing:border-box"></div>
<div style="position:absolute;left:2278px;top:1356px;width:84px;height:46px;background:linear-gradient(#fbfbfb,#ececec);border:1px solid #c4c4c4;border-radius:3px;box-sizing:border-box"></div>
<div style="position:absolute;left:2374px;top:1356px;width:168px;height:46px;background:linear-gradient(#fbfbfb,#ececec);border:1px solid #c4c4c4;border-radius:3px;box-sizing:border-box"></div>
<div class="t" style="left:2228px;top:1370px;font-size:25.8px;line-height:25.8px;color:#222;transform:scaleX(0.904);transform-origin:0 0;"><u>&lt;</u></div>
<div class="t" style="left:2313px;top:1370px;font-size:25.8px;line-height:25.8px;color:#222;transform:scaleX(0.904);transform-origin:0 0;"><u>&gt;</u></div>
<div class="t" style="left:2402px;top:1369px;font-size:25.8px;line-height:25.8px;color:#222;transform:scaleX(0.904);transform-origin:0 0;">Find <u>A</u>ll</div>
<svg style="position:absolute;left:31px;top:1433px;" width="33.858000000000004" height="33.858000000000004" viewBox="0 0 33.858000000000004 33.858000000000004"><g transform="scale(0.937)"><rect x="0.5" y="0.2" width="31.5" height="31.6" fill="#a2a2a2"/><path d="M0 0.2 L26.1 5 V27.3 L0 32 Z" fill="#f0f0f0"/><path d="M4.5 4.8 L23.2 7.4 V24.6 L4.5 27.2 Z" fill="#a2a2a2"/></g></svg>
<div class="t" style="left:107px;top:1438px;font-size:25.8px;line-height:25.8px;color:#333;transform:scaleX(0.904);transform-origin:0 0;">File</div>
<div style="position:absolute;left:181px;top:1428px;width:128px;height:39px;background:linear-gradient(#fbfbfb,#ececec);border:1px solid #c4c4c4;border-radius:3px;box-sizing:border-box"></div>
<div style="position:absolute;left:192px;top:1439px;width:16px;height:16px;background:#1e8ff5"></div>
<div class="t" style="left:218px;top:1438px;font-size:25.8px;line-height:25.8px;color:#333;transform:scaleX(0.904);transform-origin:0 0;">Copy</div>
<div style="position:absolute;left:315px;top:1428px;width:128px;height:39px;background:linear-gradient(#fbfbfb,#ececec);border:1px solid #c4c4c4;border-radius:3px;box-sizing:border-box"></div>
<div style="position:absolute;left:325px;top:1438px;width:18px;height:18px;border-radius:50%;background:#1e8ff5"></div>
<div class="t" style="left:352px;top:1438px;font-size:25.8px;line-height:25.8px;color:#333;transform:scaleX(0.904);transform-origin:0 0;">Move</div>
<div style="position:absolute;left:449px;top:1428px;width:156px;height:39px;background:linear-gradient(#fbfbfb,#ececec);border:1px solid #c4c4c4;border-radius:3px;box-sizing:border-box"></div>
<svg style="position:absolute;left:457px;top:1436px;" width="22" height="22" viewBox="0 0 22 22"><path transform="translate(11 11) rotate(0)" d="M0.6 0.6 L0.3 -9.8 C-2.2 -9.8 -4.3 -7.2 -4.3 -4.6 C-4.3 -2.2 -2.2 -0.5 0.6 0.6 Z" fill="#1e8ff5"/><path transform="translate(11 11) rotate(90)" d="M0.6 0.6 L0.3 -9.8 C-2.2 -9.8 -4.3 -7.2 -4.3 -4.6 C-4.3 -2.2 -2.2 -0.5 0.6 0.6 Z" fill="#1e8ff5"/><path transform="translate(11 11) rotate(180)" d="M0.6 0.6 L0.3 -9.8 C-2.2 -9.8 -4.3 -7.2 -4.3 -4.6 C-4.3 -2.2 -2.2 -0.5 0.6 0.6 Z" fill="#1e8ff5"/><path transform="translate(11 11) rotate(270)" d="M0.6 0.6 L0.3 -9.8 C-2.2 -9.8 -4.3 -7.2 -4.3 -4.6 C-4.3 -2.2 -2.2 -0.5 0.6 0.6 Z" fill="#1e8ff5"/></svg>
<div class="t" style="left:486px;top:1438px;font-size:25.8px;line-height:25.8px;color:#333;transform:scaleX(0.904);transform-origin:0 0;">Remove</div>
<div style="position:absolute;left:611px;top:1428px;width:156px;height:39px;background:linear-gradient(#fbfbfb,#ececec);border:1px solid #c4c4c4;border-radius:3px;box-sizing:border-box"></div>
<svg style="position:absolute;left:624px;top:1436px;" width="14" height="22" viewBox="0 0 14 22"><path d="M7 1 C10.5 1 13 3.8 13 7 C13 10.5 9.5 14.5 7 20.5 C4.5 14.5 1 10.5 1 7 C1 3.8 3.5 1 7 1 Z" fill="#1e8ff5"/></svg>
<div class="t" style="left:648px;top:1438px;font-size:25.8px;line-height:25.8px;color:#333;transform:scaleX(0.904);transform-origin:0 0;">Rename</div>
<div style="position:absolute;left:773px;top:1428px;width:184px;height:39px;background:linear-gradient(#fbfbfb,#ececec);border:1px solid #c4c4c4;border-radius:3px;box-sizing:border-box"></div>
<svg style="position:absolute;left:781px;top:1436px;" width="22" height="22" viewBox="0 0 22 22"><path d="M20 1.5 L1.5 9.5 L10 11.5 L12 20.5 Z" fill="#1e8ff5"/></svg>
<div class="t" style="left:810px;top:1438px;font-size:25.8px;line-height:25.8px;color:#333;transform:scaleX(0.904);transform-origin:0 0;">Property</div>
<div class="t" style="left:970px;top:1438px;font-size:25.8px;line-height:25.8px;color:#333;transform:scaleX(0.904);transform-origin:0 0;">Network</div>
<div style="position:absolute;left:1087px;top:1428px;width:128px;height:39px;background:linear-gradient(#fbfbfb,#ececec);border:1px solid #c4c4c4;border-radius:3px;box-sizing:border-box"></div>
<div style="position:absolute;left:1098px;top:1439px;width:16px;height:16px;background:#ff1493"></div>
<div class="t" style="left:1124px;top:1438px;font-size:25.8px;line-height:25.8px;color:#333;transform:scaleX(0.904);transform-origin:0 0;">ping</div>
<div style="position:absolute;left:1221px;top:1428px;width:212px;height:39px;background:linear-gradient(#fbfbfb,#ececec);border:1px solid #c4c4c4;border-radius:3px;box-sizing:border-box"></div>
<div style="position:absolute;left:1231px;top:1438px;width:18px;height:18px;border-radius:50%;background:#ff1493"></div>
<div class="t" style="left:1258px;top:1438px;font-size:25.8px;line-height:25.8px;color:#333;transform:scaleX(0.904);transform-origin:0 0;">traceroute</div>
<div style="position:absolute;left:1439px;top:1428px;width:114px;height:39px;background:linear-gradient(#fbfbfb,#ececec);border:1px solid #c4c4c4;border-radius:3px;box-sizing:border-box"></div>
<svg style="position:absolute;left:1447px;top:1436px;" width="22" height="22" viewBox="0 0 22 22"><path transform="translate(11 11) rotate(0)" d="M0.6 0.6 L0.3 -9.8 C-2.2 -9.8 -4.3 -7.2 -4.3 -4.6 C-4.3 -2.2 -2.2 -0.5 0.6 0.6 Z" fill="#ff1493"/><path transform="translate(11 11) rotate(90)" d="M0.6 0.6 L0.3 -9.8 C-2.2 -9.8 -4.3 -7.2 -4.3 -4.6 C-4.3 -2.2 -2.2 -0.5 0.6 0.6 Z" fill="#ff1493"/><path transform="translate(11 11) rotate(180)" d="M0.6 0.6 L0.3 -9.8 C-2.2 -9.8 -4.3 -7.2 -4.3 -4.6 C-4.3 -2.2 -2.2 -0.5 0.6 0.6 Z" fill="#ff1493"/><path transform="translate(11 11) rotate(270)" d="M0.6 0.6 L0.3 -9.8 C-2.2 -9.8 -4.3 -7.2 -4.3 -4.6 C-4.3 -2.2 -2.2 -0.5 0.6 0.6 Z" fill="#ff1493"/></svg>
<div class="t" style="left:1476px;top:1438px;font-size:25.8px;line-height:25.8px;color:#333;transform:scaleX(0.904);transform-origin:0 0;">mtr</div>
<div style="position:absolute;left:1559px;top:1428px;width:184px;height:39px;background:linear-gradient(#fbfbfb,#ececec);border:1px solid #c4c4c4;border-radius:3px;box-sizing:border-box"></div>
<svg style="position:absolute;left:1567px;top:1435px;" width="22" height="22" viewBox="0 0 22 22"><path d="M11 1 L13.6 8.1 L21 8.3 L15.1 12.9 L17.2 20.2 L11 16 L4.8 20.2 L6.9 12.9 L1 8.3 L8.4 8.1 Z" fill="#ff1493"/></svg>
<div class="t" style="left:1596px;top:1438px;font-size:25.8px;line-height:25.8px;color:#333;transform:scaleX(0.904);transform-origin:0 0;">ifconfig</div>
<div style="position:absolute;left:1749px;top:1428px;width:170px;height:39px;background:linear-gradient(#fbfbfb,#ececec);border:1px solid #c4c4c4;border-radius:3px;box-sizing:border-box"></div>
<svg style="position:absolute;left:1761px;top:1435px;" width="14" height="24" viewBox="0 0 14 24"><path d="M1 1 H13 V23 L7 17 L1 23 Z" fill="#ff1493"/></svg>
<div class="t" style="left:1786px;top:1438px;font-size:25.8px;line-height:25.8px;color:#333;transform:scaleX(0.904);transform-origin:0 0;">tcpdump</div>
<div class="t" style="left:1932px;top:1438px;font-size:25.8px;line-height:25.8px;color:#333;transform:scaleX(0.904);transform-origin:0 0;">Shell</div>
<div style="position:absolute;left:2021px;top:1428px;width:100px;height:39px;background:linear-gradient(#fbfbfb,#ececec);border:1px solid #c4c4c4;border-radius:3px;box-sizing:border-box"></div>
<div style="position:absolute;left:2031px;top:1438px;width:18px;height:18px;border-radius:50%;background:#ffd400"></div>
<div class="t" style="left:2058px;top:1438px;font-size:25.8px;line-height:25.8px;color:#333;transform:scaleX(0.904);transform-origin:0 0;">ls</div>
<div style="position:absolute;left:2127px;top:1428px;width:114px;height:39px;background:linear-gradient(#fbfbfb,#ececec);border:1px solid #c4c4c4;border-radius:3px;box-sizing:border-box"></div>
<svg style="position:absolute;left:2135px;top:1436px;" width="22" height="22" viewBox="0 0 22 22"><path d="M20 1.5 L1.5 9.5 L10 11.5 L12 20.5 Z" fill="#ffd400"/></svg>
<div class="t" style="left:2164px;top:1438px;font-size:25.8px;line-height:25.8px;color:#333;transform:scaleX(0.904);transform-origin:0 0;">cat</div>
<div style="position:absolute;left:2247px;top:1428px;width:100px;height:39px;background:linear-gradient(#fbfbfb,#ececec);border:1px solid #c4c4c4;border-radius:3px;box-sizing:border-box"></div>
<svg style="position:absolute;left:2255px;top:1435px;" width="22" height="22" viewBox="0 0 22 22"><path d="M11 1 L13.6 8.1 L21 8.3 L15.1 12.9 L17.2 20.2 L11 16 L4.8 20.2 L6.9 12.9 L1 8.3 L8.4 8.1 Z" fill="#ffd400"/></svg>
<div class="t" style="left:2284px;top:1438px;font-size:25.8px;line-height:25.8px;color:#333;transform:scaleX(0.904);transform-origin:0 0;">vi</div>
<svg style="position:absolute;left:2495px;top:1436px;" width="24" height="24" viewBox="0 0 24 24"><circle cx="12" cy="12" r="5.6" fill="none" stroke="#9a9a9a" stroke-width="1.9"/><path d="M18.00 12.00 L22.00 12.00 M16.24 16.24 L19.07 19.07 M12.00 18.00 L12.00 22.00 M7.76 16.24 L4.93 19.07 M6.00 12.00 L2.00 12.00 M7.76 7.76 L4.93 4.93 M12.00 6.00 L12.00 2.00 M16.24 7.76 L19.07 4.93" stroke="#9a9a9a" stroke-width="2.3"/></svg>
<svg style="position:absolute;left:2532px;top:1438px;" width="20" height="20" viewBox="0 0 20 20"><path d="M3.7 3.7 L16.3 16.3 M16.3 3.7 L3.7 16.3" stroke="#9a9a9a" stroke-width="2"/></svg>
<div style="position:absolute;left:0px;top:1476px;width:2560px;height:44px;background:#0077cc"></div>
<div class="t" style="left:25px;top:1488px;font-size:25.8px;line-height:25.8px;color:#fff;transform:scaleX(0.904);transform-origin:0 0;">3 Found</div>
<div class="t" style="left:1680px;top:1488px;font-size:25.8px;line-height:25.8px;color:#fff;transform:scaleX(0.904);transform-origin:0 0;font-weight:bold;letter-spacing:1px">Remote Mode</div>
<div style="position:absolute;left:1844px;top:1482px;width:2px;height:31px;background:#f08a24"></div>
<div class="t" style="left:1881px;top:1488px;font-size:25.8px;line-height:25.8px;color:#fff;transform:scaleX(0.904);transform-origin:0 0;">Ln 21 Ch 16</div>
<div class="t" style="left:2078px;top:1488px;font-size:25.8px;line-height:25.8px;color:#fff;transform:scaleX(0.904);transform-origin:0 0;">linux</div>
<div class="t" style="left:2184px;top:1488px;font-size:25.8px;line-height:25.8px;color:#fff;transform:scaleX(0.904);transform-origin:0 0;">2020/10/19 4:44</div>
</body></html>
